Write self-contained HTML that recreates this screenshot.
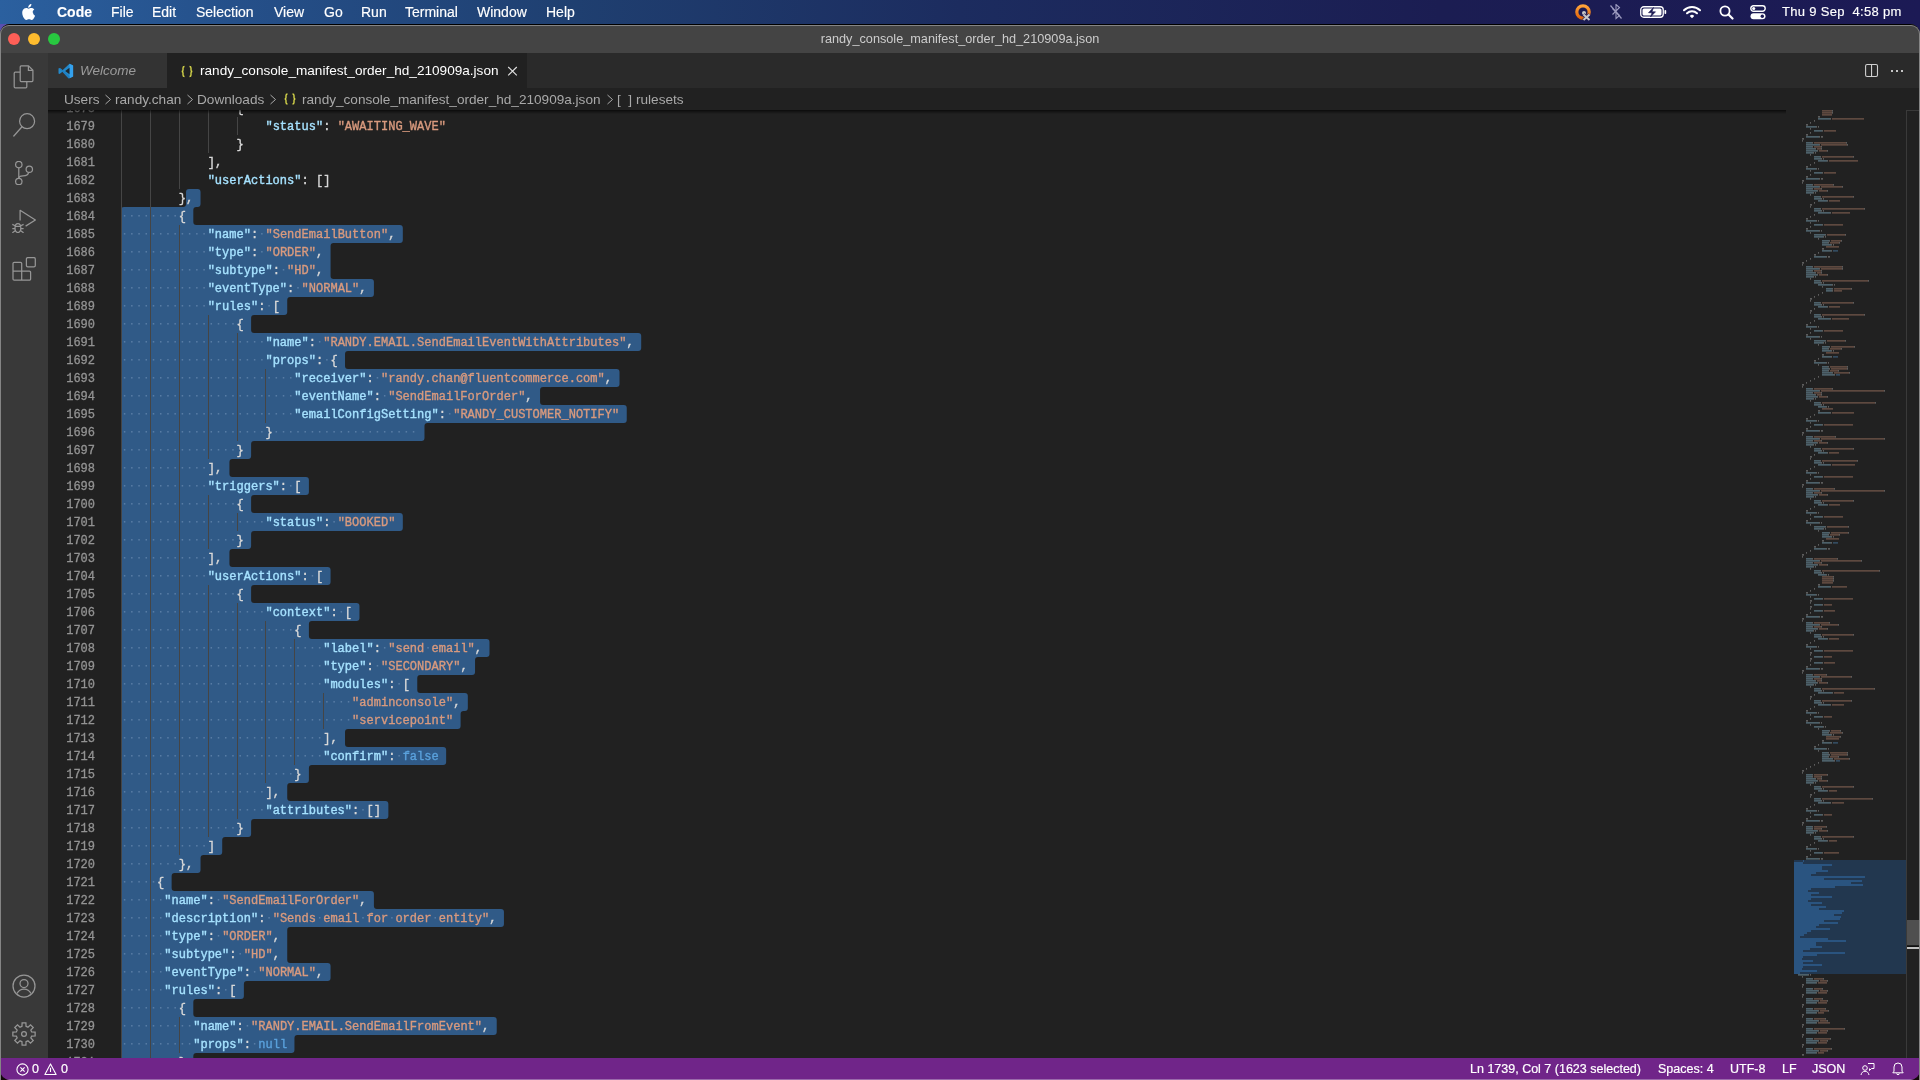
<!DOCTYPE html>
<html><head><meta charset="utf-8">
<style>
*{margin:0;padding:0;box-sizing:border-box}
html,body{width:1920px;height:1080px;overflow:hidden;background:linear-gradient(90deg,#5a4fb0,#1c1a55 10%);font-family:"Liberation Sans",sans-serif}
.abs{position:absolute}
#menubar{will-change:transform;position:absolute;left:0;top:0;width:1920px;height:24px;background:linear-gradient(90deg,#2b609f 0%,#25508a 12%,#1f3f70 30%,#1c2c5f 50%,#1b1d52 75%,#1c1a55 100%);color:#fff;font-size:14px}
#menubar .mi{position:absolute;top:4px;line-height:16px;white-space:nowrap;-webkit-text-stroke:0.15px #fff}
#win{position:absolute;left:0;top:24px;width:1920px;height:1056px;border-radius:10px 10px 10px 10px;overflow:hidden;background:#212121;will-change:transform}
#wborder{position:absolute;left:0;top:24px;width:1920px;height:1056px;border-radius:10px 10px 0 0;border-top:1px solid #000;pointer-events:none;z-index:10}
#wborder2{position:absolute;left:0;top:25px;width:1920px;height:1055px;border-radius:9px 9px 0 0;border:1px solid #858585;border-bottom:none;pointer-events:none;z-index:10}
#titlebar{position:absolute;left:0;top:0;width:1920px;height:29px;background:#444444}
#titlebar .t{position:absolute;left:0;width:1920px;top:7px;text-align:center;color:#cccccc;font-size:12.7px;line-height:16px}
.tl{position:absolute;top:9px;width:12px;height:12px;border-radius:50%}
#actbar{position:absolute;left:0;top:29px;width:48px;height:1005px;background:#393939}
#tabs{position:absolute;left:48px;top:29px;width:1872px;height:35px;background:#2a2a2a}
.tab{position:absolute;top:0;height:35px}
#crumbs{position:absolute;left:48px;top:64px;width:1872px;height:22px;background:#212121;color:#a9a9a9;font-size:13.6px;z-index:2}
#crumbs span.c{position:absolute;top:3.8px;line-height:16px;white-space:nowrap}
#editor{position:absolute;left:48px;top:86px;width:1872px;height:948px;background:#212121;overflow:hidden}
#status{position:absolute;left:0;top:1034px;width:1920px;height:22px;background:#702589;border-bottom:1px solid #9a6aab;color:#fff;font-size:12.5px}
#status .s{position:absolute;top:2.5px;line-height:16px;white-space:nowrap;-webkit-text-stroke:0.2px #fff}
/* code (page coordinates: subtract editor offset) */
#code{position:absolute;left:-48px;top:-110px;width:1920px;height:1080px}
.ln{position:absolute;left:38.5px;width:56px;margin-top:1px;will-change:transform;-webkit-text-stroke:0.3px #939393;text-align:right;font-family:"Liberation Mono",monospace;font-size:12px;line-height:18px;color:#939393;height:18px}
.cl{position:absolute;left:121.3px;margin-top:1px;will-change:transform;-webkit-text-stroke:0.35px currentColor;white-space:pre;font-family:"Liberation Mono",monospace;font-size:12.04px;line-height:18px;height:18px;color:#d4d4d4}
.ig{position:absolute;width:1px;height:18px;background:#454545}
</style></head>
<body>
<div id="menubar">
  <svg class="abs" style="left:21px;top:4px" width="14" height="16" viewBox="0 0 14 16"><path fill="#fff" d="M11.6 8.5c0-2 1.6-2.9 1.7-3-0.9-1.3-2.3-1.5-2.8-1.5-1.2-0.1-2.3 0.7-2.9 0.7-0.6 0-1.5-0.7-2.5-0.7C3.800 4 2.600 4.800 1.900 6c-1.400 2.400-0.400 6 1 8 0.700 1 1.500 2 2.500 2 1 0 1.400-0.700 2.600-0.700s1.500 0.700 2.600 0.700c1.100 0 1.700-1 2.400-2 0.800-1.100 1.100-2.200 1.100-2.300 0 0-2.100-0.800-2.100-3.200zM9.600 2.600c0.500-0.700 0.900-1.600 0.800-2.600-0.800 0-1.800 0.500-2.400 1.200-0.500 0.600-1 1.500-0.800 2.500 0.900 0.100 1.800-0.400 2.400-1.100z"/></svg>
  <div class="mi" style="left:57px;font-weight:bold">Code</div>
  <div class="mi" style="left:111px">File</div>
  <div class="mi" style="left:152px">Edit</div>
  <div class="mi" style="left:196px">Selection</div>
  <div class="mi" style="left:274px">View</div>
  <div class="mi" style="left:324px">Go</div>
  <div class="mi" style="left:361px">Run</div>
  <div class="mi" style="left:405px">Terminal</div>
  <div class="mi" style="left:477px">Window</div>
  <div class="mi" style="left:546px">Help</div>
  <!-- status icons -->
  <svg class="abs" style="left:1575px;top:4px" width="18" height="17" viewBox="0 0 18 17">
    <defs><linearGradient id="og" x1="0" y1="0" x2="0" y2="1"><stop offset="0" stop-color="#ffa43a"/><stop offset="1" stop-color="#e0620a"/></linearGradient></defs>
    <circle cx="8" cy="8" r="6.2" fill="none" stroke="url(#og)" stroke-width="3.2"/>
    <circle cx="9" cy="9" r="2" fill="#c8c8c8"/>
    <path d="M8.5 10.5l6 5.5M14.5 10.5l-6 5.5" stroke="#1e1b50" stroke-width="3.4"/>
    <path d="M8.5 10.5l6 5.5M14.5 10.5l-6 5.5" stroke="#c8c8c8" stroke-width="2"/>
  </svg>
  <svg class="abs" style="left:1609px;top:4px" width="14" height="16" viewBox="0 0 14 16">
    <path d="M3.5 4.5l7 7-3.5 3v-14l3.5 3-7 7" fill="none" stroke="#9d9cc0" stroke-width="1.1"/>
    <path d="M1.5 1.5l11 13" stroke="#9d9cc0" stroke-width="1.2"/>
  </svg>
  <svg class="abs" style="left:1640px;top:6px" width="27" height="12" viewBox="0 0 27 12">
    <rect x="0.75" y="0.75" width="22.5" height="10.5" rx="3" fill="none" stroke="#fff" stroke-width="1.3"/>
    <rect x="24.5" y="4" width="1.7" height="4" rx="0.8" fill="#fff"/>
    <rect x="2.5" y="2.5" width="19" height="7" rx="1.5" fill="#fff"/>
    <path d="M13.5 1.5l-5 5.2h3.5l-1.5 4.3 5-5.2h-3.5z" fill="#1c1b54" stroke="#1c1b54" stroke-width="0.6"/>
  </svg>
  <svg class="abs" style="left:1683px;top:5px" width="18" height="14" viewBox="0 0 18 14">
    <path d="M1 5.2a11.5 11.5 0 0 1 16 0" fill="none" stroke="#fff" stroke-width="2" stroke-linecap="round"/>
    <path d="M4 8.2a7.2 7.2 0 0 1 10 0" fill="none" stroke="#fff" stroke-width="2" stroke-linecap="round"/>
    <path d="M6.8 11a3 3 0 0 1 4.4 0L9 13.3z" fill="#fff"/>
  </svg>
  <svg class="abs" style="left:1719px;top:5px" width="15" height="15" viewBox="0 0 15 15">
    <circle cx="6" cy="6" r="4.6" fill="none" stroke="#fff" stroke-width="1.8"/>
    <path d="M9.5 9.5l4 4" stroke="#fff" stroke-width="2.2" stroke-linecap="round"/>
  </svg>
  <svg class="abs" style="left:1750px;top:5px" width="16" height="15" viewBox="0 0 16 15">
    <rect x="0.8" y="0.8" width="14.4" height="5.4" rx="2.7" fill="none" stroke="#fff" stroke-width="1.4"/>
    <circle cx="3.7" cy="3.5" r="1.6" fill="#fff"/>
    <rect x="0.5" y="8.3" width="15" height="6" rx="3" fill="#fff"/>
    <circle cx="12.3" cy="11.3" r="1.7" fill="#1c1b54"/>
  </svg>
  <div class="mi" style="left:1782px;top:3.6px;font-size:13px;letter-spacing:0.3px">Thu 9 Sep&nbsp;&nbsp;4:58 pm</div>
</div>

<div class="abs" style="left:0;top:1040px;width:30px;height:40px;background:#120808"></div>
<div class="abs" style="left:1890px;top:1040px;width:30px;height:40px;background:#120808"></div>
<div id="win">
  <div id="titlebar">
    <div class="tl" style="left:8px;background:#fe5f57"></div>
    <div class="tl" style="left:28px;background:#febc2e"></div>
    <div class="tl" style="left:48px;background:#28c840"></div>
    <div class="t">randy_console_manifest_order_hd_210909a.json</div>
  </div>
  <div id="actbar">
    <!-- explorer -->
    <svg class="abs" style="left:12px;top:12px" width="24" height="24" viewBox="0 0 24 24" fill="none" stroke="#969696" stroke-width="1.25" stroke-linejoin="round">
      <path d="M9.2,0.9 H16.6 L20.9,5.2 V15.6 a1,1 0 0 1 -1,1 H9.2 a1,1 0 0 1 -1,-1 V1.9 a1,1 0 0 1 1,-1 Z"/>
      <path d="M16.4,1 V5.4 H20.8"/>
      <path d="M8.2,7.2 H3.2 a1,1 0 0 0 -1,1 V21.8 a1,1 0 0 0 1,1 H13.8 a1,1 0 0 0 1,-1 V16.6"/>
    </svg>
    <!-- search -->
    <svg class="abs" style="left:12px;top:60px" width="24" height="24" viewBox="0 0 24 24" fill="none" stroke="#969696" stroke-width="1.25">
      <circle cx="15.1" cy="8.2" r="7.5"/>
      <path d="M9.8,14 L1.8,23" stroke-linecap="round"/>
    </svg>
    <!-- scm -->
    <svg class="abs" style="left:12px;top:108px" width="24" height="24" viewBox="0 0 24 24" fill="none" stroke="#969696" stroke-width="1.25">
      <circle cx="6.8" cy="3.6" r="3.2"/>
      <circle cx="17.3" cy="8.2" r="3.2"/>
      <circle cx="6.8" cy="20.5" r="3.2"/>
      <path d="M6.8,6.8 V17.3"/>
      <path d="M16.6,11.3 C16.2,14.3 13.6,14.8 11,14.8 C8.6,14.8 6.8,15.8 6.8,17.6"/>
    </svg>
    <!-- run -->
    <svg class="abs" style="left:12px;top:156px" width="24" height="24" viewBox="0 0 24 24" fill="none" stroke="#969696" stroke-width="1.25" stroke-linejoin="round">
      <path d="M8.1,11.4 V1.3 L23.4,11 L13.6,17.1"/>
      <ellipse cx="5.9" cy="19.1" rx="2.9" ry="4.4"/>
      <path d="M3,17.3 H8.8"/>
      <path d="M0.3,15.4 L3.2,16.8 M11.6,15.4 L8.7,16.8 M0.3,19.7 H3 M11.6,19.7 H8.8 M0.3,23.8 L3.2,21.8 M11.6,23.8 L8.7,21.8"/>
    </svg>
    <!-- extensions -->
    <svg class="abs" style="left:12px;top:204px" width="24" height="24" viewBox="0 0 24 24" fill="none" stroke="#969696" stroke-width="1.25" stroke-linejoin="round">
      <rect x="14.4" y="0.6" width="8.9" height="9.2" rx="1.4"/>
      <path d="M1,6.6 a1.2,1.2 0 0 1 1.2,-1.2 H8.5 a1.2,1.2 0 0 1 1.2,1.2 V14.2 H17.4 a1.2,1.2 0 0 1 1.2,1.2 V21.9 a1.2,1.2 0 0 1 -1.2,1.2 H2.2 a1.2,1.2 0 0 1 -1.2,-1.2 Z"/>
      <path d="M1,14.2 H9.7 V23"/>
    </svg>
    <!-- account -->
    <svg class="abs" style="left:12px;top:921px" width="24" height="24" viewBox="0 0 24 24" fill="none" stroke="#969696" stroke-width="1.25">
      <circle cx="12" cy="12" r="11"/>
      <circle cx="12" cy="9.5" r="4"/>
      <path d="M5 19.5c1.5-3 4-4.5 7-4.5s5.5 1.5 7 4.5"/>
    </svg>
    <!-- gear -->
    <svg class="abs" style="left:12px;top:969px" width="24" height="24" viewBox="0 0 24 24" fill="none" stroke="#969696" stroke-width="1.25" stroke-linejoin="miter">
      <path d="M9.97,4.37 L10.09,0.86 L13.91,0.86 L14.03,4.37 L15.96,5.17 L18.52,2.77 L21.23,5.48 L18.83,8.04 L19.63,9.97 L23.14,10.09 L23.14,13.91 L19.63,14.03 L18.83,15.96 L21.23,18.52 L18.52,21.23 L15.96,18.83 L14.03,19.63 L13.91,23.14 L10.09,23.14 L9.97,19.63 L8.04,18.83 L5.48,21.23 L2.77,18.52 L5.17,15.96 L4.37,14.03 L0.86,13.91 L0.86,10.09 L4.37,9.97 L5.17,8.04 L2.77,5.48 L5.48,2.77 L8.04,5.17Z"/>
      <circle cx="12" cy="12" r="2.4"/>
    </svg>
  </div>
  <div id="tabs">
    <div class="tab" style="left:0;width:119px;background:#333333">
      <svg class="abs" style="left:10px;top:10px" width="16" height="16" viewBox="0 0 16 16">
        <path d="M11.5 0.8l3.6 1.7v11l-3.6 1.7-7-6.4-3 2.3-1-0.6v-5l1-0.6 3 2.3z" fill="#2489ca"/>
        <path d="M11.5 0.8l3.6 1.7v11l-3.6 1.7z" fill="#34a1ed"/>
        <path d="M11.5 4.7v6.6l-4.3-3.3z" fill="#1e1e1e" opacity="0.9"/>
        <path d="M1.5 5.8l1 -0.6 9 8.1v1.9l-1 .3z" fill="#1f7fc2"/>
      </svg>
      <div class="abs" style="left:32px;top:10px;font-size:13.5px;font-style:italic;color:#9b9b9b;line-height:16px">Welcome</div>
    </div>
    <div class="tab" style="left:119px;width:360px;background:#212121">
      <svg class="abs" style="left:14px;top:11.5px" width="12" height="13" viewBox="0 0 12 12" fill="none" stroke="#d4d44a" stroke-width="1.4"><path d="M3.5 1c-1.2 0-1.5 0.6-1.5 1.5v2c0 0.8-0.4 1.3-1.2 1.5 0.8 0.2 1.2 0.7 1.2 1.5v2c0 0.9 0.3 1.5 1.5 1.5"/><path d="M8.5 1c1.2 0 1.5 0.6 1.5 1.5v2c0 0.8 0.4 1.3 1.2 1.5-0.8 0.2-1.2 0.7-1.2 1.5v2c0 0.9-0.3 1.5-1.5 1.5"/></svg>
      <div class="abs" style="left:33px;top:10px;font-size:13.6px;color:#ffffff;line-height:16px;white-space:nowrap">randy_console_manifest_order_hd_210909a.json</div>
      <svg class="abs" style="left:340px;top:13px" width="11" height="11" viewBox="0 0 11 11"><path d="M1.2 1l8.6 8.4M9.8 1l-8.6 8.4" stroke="#e0e0e0" stroke-width="1.15"/></svg>
    </div>
    <svg class="abs" style="left:1816px;top:10px" width="16" height="16" viewBox="0 0 16 16" fill="none" stroke="#d0d0d0" stroke-width="1.1">
      <rect x="1.6" y="1.5" width="11.9" height="12" rx="1.5"/><path d="M7.55 1.5v12"/>
    </svg>
    <svg class="abs" style="left:1842px;top:10px" width="16" height="16" viewBox="0 0 16 16" fill="#c5c5c5">
      <rect x="1" y="7" width="2" height="2"/><rect x="6" y="7" width="2" height="2"/><rect x="11" y="7" width="2" height="2"/>
    </svg>
  </div>
  <div id="crumbs">
    <span class="c" style="left:16px">Users</span>
    <svg class="abs" style="left:56px;top:6px" width="8" height="11" viewBox="0 0 8 11"><path d="M1.5 1l5 4.5-5 4.5" fill="none" stroke="#a9a9a9" stroke-width="1"/></svg>
    <span class="c" style="left:67px">randy.chan</span>
    <svg class="abs" style="left:138px;top:6px" width="8" height="11" viewBox="0 0 8 11"><path d="M1.5 1l5 4.5-5 4.5" fill="none" stroke="#a9a9a9" stroke-width="1"/></svg>
    <span class="c" style="left:149px">Downloads</span>
    <svg class="abs" style="left:221px;top:6px" width="8" height="11" viewBox="0 0 8 11"><path d="M1.5 1l5 4.5-5 4.5" fill="none" stroke="#a9a9a9" stroke-width="1"/></svg>
    <svg class="abs" style="left:236px;top:5px" width="12" height="12" viewBox="0 0 12 12" fill="none" stroke="#d4d44a" stroke-width="1.4"><path d="M3.5 1c-1.2 0-1.5 0.6-1.5 1.5v2c0 0.8-0.4 1.3-1.2 1.5 0.8 0.2 1.2 0.7 1.2 1.5v2c0 0.9 0.3 1.5 1.5 1.5"/><path d="M8.5 1c1.2 0 1.5 0.6 1.5 1.5v2c0 0.8 0.4 1.3 1.2 1.5-0.8 0.2-1.2 0.7-1.2 1.5v2c0 0.9-0.3 1.5-1.5 1.5"/></svg>
    <span class="c" style="left:254px">randy_console_manifest_order_hd_210909a.json</span>
    <svg class="abs" style="left:558px;top:6px" width="8" height="11" viewBox="0 0 8 11"><path d="M1.5 1l5 4.5-5 4.5" fill="none" stroke="#a9a9a9" stroke-width="1"/></svg>
    <span class="c" style="left:569px">[&nbsp;&nbsp;]</span>
    <span class="c" style="left:588px">rulesets</span>
  </div>
  <div class="abs" style="left:48px;top:86px;width:1738px;height:4px;background:linear-gradient(#000000a0,#00000000);z-index:3"></div>
  <div id="editor">
    <div id="code">
      <div class="ln" style="top:99px">1678</div>
<div class="ln" style="top:117px">1679</div>
<div class="ln" style="top:135px">1680</div>
<div class="ln" style="top:153px">1681</div>
<div class="ln" style="top:171px">1682</div>
<div class="ln" style="top:189px">1683</div>
<div class="ln" style="top:207px">1684</div>
<div class="ln" style="top:225px">1685</div>
<div class="ln" style="top:243px">1686</div>
<div class="ln" style="top:261px">1687</div>
<div class="ln" style="top:279px">1688</div>
<div class="ln" style="top:297px">1689</div>
<div class="ln" style="top:315px">1690</div>
<div class="ln" style="top:333px">1691</div>
<div class="ln" style="top:351px">1692</div>
<div class="ln" style="top:369px">1693</div>
<div class="ln" style="top:387px">1694</div>
<div class="ln" style="top:405px">1695</div>
<div class="ln" style="top:423px">1696</div>
<div class="ln" style="top:441px">1697</div>
<div class="ln" style="top:459px">1698</div>
<div class="ln" style="top:477px">1699</div>
<div class="ln" style="top:495px">1700</div>
<div class="ln" style="top:513px">1701</div>
<div class="ln" style="top:531px">1702</div>
<div class="ln" style="top:549px">1703</div>
<div class="ln" style="top:567px">1704</div>
<div class="ln" style="top:585px">1705</div>
<div class="ln" style="top:603px">1706</div>
<div class="ln" style="top:621px">1707</div>
<div class="ln" style="top:639px">1708</div>
<div class="ln" style="top:657px">1709</div>
<div class="ln" style="top:675px">1710</div>
<div class="ln" style="top:693px">1711</div>
<div class="ln" style="top:711px">1712</div>
<div class="ln" style="top:729px">1713</div>
<div class="ln" style="top:747px">1714</div>
<div class="ln" style="top:765px">1715</div>
<div class="ln" style="top:783px">1716</div>
<div class="ln" style="top:801px">1717</div>
<div class="ln" style="top:819px">1718</div>
<div class="ln" style="top:837px">1719</div>
<div class="ln" style="top:855px">1720</div>
<div class="ln" style="top:873px">1721</div>
<div class="ln" style="top:891px">1722</div>
<div class="ln" style="top:909px">1723</div>
<div class="ln" style="top:927px">1724</div>
<div class="ln" style="top:945px">1725</div>
<div class="ln" style="top:963px">1726</div>
<div class="ln" style="top:981px">1727</div>
<div class="ln" style="top:999px">1728</div>
<div class="ln" style="top:1017px">1729</div>
<div class="ln" style="top:1035px">1730</div>
<div class="ln" style="top:1053px">1731</div>
<div class="ln" style="top:1071px">1732</div>
      <svg class="abs" style="left:0;top:0" width="1920" height="1080">
        <path d="M186.02,192.00 A3,3 0 0 1 189.02,189.00 L197.54,189.00 A3,3 0 0 1 200.54,192.00 L200.54,204.00 A3,3 0 0 1 197.54,207.00 L196.32,207.00 A3,3 0 0 0 193.32,210.00 L193.32,222.00 A3,3 0 0 0 196.32,225.00 L399.81,225.00 A3,3 0 0 1 402.81,228.00 L402.81,240.00 A3,3 0 0 1 399.81,243.00 L333.57,243.00 A3,3 0 0 0 330.57,246.00 L330.57,276.00 A3,3 0 0 0 333.57,279.00 L370.92,279.00 A3,3 0 0 1 373.92,282.00 L373.92,294.00 A3,3 0 0 1 370.92,297.00 L290.23,297.00 A3,3 0 0 0 287.23,300.00 L287.23,312.00 A3,3 0 0 1 284.23,315.00 L254.11,315.00 A3,3 0 0 0 251.11,318.00 L251.11,330.00 A3,3 0 0 0 254.11,333.00 L638.20,333.00 A3,3 0 0 1 641.20,336.00 L641.20,348.00 A3,3 0 0 1 638.20,351.00 L348.02,351.00 A3,3 0 0 0 345.02,354.00 L345.02,366.00 A3,3 0 0 0 348.02,369.00 L616.53,369.00 A3,3 0 0 1 619.53,372.00 L619.53,384.00 A3,3 0 0 1 616.53,387.00 L543.07,387.00 A3,3 0 0 0 540.07,390.00 L540.07,402.00 A3,3 0 0 0 543.07,405.00 L623.76,405.00 A3,3 0 0 1 626.76,408.00 L626.76,420.00 A3,3 0 0 1 623.76,423.00 L427.48,423.00 A3,3 0 0 0 424.48,426.00 L424.48,438.00 A3,3 0 0 1 421.48,441.00 L254.11,441.00 A3,3 0 0 0 251.11,444.00 L251.11,456.00 A3,3 0 0 1 248.11,459.00 L232.44,459.00 A3,3 0 0 0 229.44,462.00 L229.44,474.00 A3,3 0 0 0 232.44,477.00 L305.90,477.00 A3,3 0 0 1 308.90,480.00 L308.90,492.00 A3,3 0 0 1 305.90,495.00 L254.11,495.00 A3,3 0 0 0 251.11,498.00 L251.11,510.00 A3,3 0 0 0 254.11,513.00 L399.81,513.00 A3,3 0 0 1 402.81,516.00 L402.81,528.00 A3,3 0 0 1 399.81,531.00 L254.11,531.00 A3,3 0 0 0 251.11,534.00 L251.11,546.00 A3,3 0 0 1 248.11,549.00 L232.44,549.00 A3,3 0 0 0 229.44,552.00 L229.44,564.00 A3,3 0 0 0 232.44,567.00 L327.57,567.00 A3,3 0 0 1 330.57,570.00 L330.57,582.00 A3,3 0 0 1 327.57,585.00 L254.11,585.00 A3,3 0 0 0 251.11,588.00 L251.11,600.00 A3,3 0 0 0 254.11,603.00 L356.47,603.00 A3,3 0 0 1 359.47,606.00 L359.47,618.00 A3,3 0 0 1 356.47,621.00 L311.90,621.00 A3,3 0 0 0 308.90,624.00 L308.90,636.00 A3,3 0 0 0 311.90,639.00 L486.50,639.00 A3,3 0 0 1 489.50,642.00 L489.50,654.00 A3,3 0 0 1 486.50,657.00 L478.05,657.00 A3,3 0 0 0 475.05,660.00 L475.05,672.00 A3,3 0 0 1 472.05,675.00 L420.26,675.00 A3,3 0 0 0 417.26,678.00 L417.26,690.00 A3,3 0 0 0 420.26,693.00 L464.83,693.00 A3,3 0 0 1 467.83,696.00 L467.83,708.00 A3,3 0 0 1 464.83,711.00 L463.60,711.00 A3,3 0 0 0 460.60,714.00 L460.60,726.00 A3,3 0 0 1 457.60,729.00 L348.02,729.00 A3,3 0 0 0 345.02,732.00 L345.02,744.00 A3,3 0 0 0 348.02,747.00 L443.16,747.00 A3,3 0 0 1 446.16,750.00 L446.16,762.00 A3,3 0 0 1 443.16,765.00 L311.90,765.00 A3,3 0 0 0 308.90,768.00 L308.90,780.00 A3,3 0 0 1 305.90,783.00 L290.23,783.00 A3,3 0 0 0 287.23,786.00 L287.23,798.00 A3,3 0 0 0 290.23,801.00 L385.36,801.00 A3,3 0 0 1 388.36,804.00 L388.36,816.00 A3,3 0 0 1 385.36,819.00 L254.11,819.00 A3,3 0 0 0 251.11,822.00 L251.11,834.00 A3,3 0 0 1 248.11,837.00 L225.21,837.00 A3,3 0 0 0 222.21,840.00 L222.21,852.00 A3,3 0 0 1 219.21,855.00 L203.54,855.00 A3,3 0 0 0 200.54,858.00 L200.54,870.00 A3,3 0 0 1 197.54,873.00 L174.64,873.00 A3,3 0 0 0 171.64,876.00 L171.64,888.00 A3,3 0 0 0 174.64,891.00 L370.92,891.00 A3,3 0 0 1 373.92,894.00 L373.92,906.00 A3,3 0 0 0 376.92,909.00 L500.95,909.00 A3,3 0 0 1 503.95,912.00 L503.95,924.00 A3,3 0 0 1 500.95,927.00 L290.23,927.00 A3,3 0 0 0 287.23,930.00 L287.23,960.00 A3,3 0 0 0 290.23,963.00 L327.57,963.00 A3,3 0 0 1 330.57,966.00 L330.57,978.00 A3,3 0 0 1 327.57,981.00 L246.88,981.00 A3,3 0 0 0 243.88,984.00 L243.88,996.00 A3,3 0 0 1 240.88,999.00 L196.32,999.00 A3,3 0 0 0 193.32,1002.00 L193.32,1014.00 A3,3 0 0 0 196.32,1017.00 L493.72,1017.00 A3,3 0 0 1 496.72,1020.00 L496.72,1032.00 A3,3 0 0 1 493.72,1035.00 L297.45,1035.00 A3,3 0 0 0 294.45,1038.00 L294.45,1050.00 A3,3 0 0 1 291.45,1053.00 L196.32,1053.00 A3,3 0 0 0 193.32,1056.00 L193.32,1068.00 A3,3 0 0 1 190.32,1071.00 L189.09,1071.00 A3,3 0 0 0 186.09,1074.00 L186.09,1126.00 A3,3 0 0 1 183.09,1129.00 L124.00,1129.00 A3,3 0 0 1 121.00,1126.00 L121.00,210.00 A3,3 0 0 1 124.00,207.00 L183.02,207.00 A3,3 0 0 0 186.02,204.00 Z" fill="#305a87"/>
        <g fill="#5a7ea6"><rect x="123.86" y="215.05" width="1.5" height="1.5"/><rect x="131.09" y="215.05" width="1.5" height="1.5"/><rect x="138.31" y="215.05" width="1.5" height="1.5"/><rect x="145.53" y="215.05" width="1.5" height="1.5"/><rect x="152.76" y="215.05" width="1.5" height="1.5"/><rect x="159.98" y="215.05" width="1.5" height="1.5"/><rect x="167.21" y="215.05" width="1.5" height="1.5"/><rect x="174.43" y="215.05" width="1.5" height="1.5"/><rect x="123.86" y="233.05" width="1.5" height="1.5"/><rect x="131.09" y="233.05" width="1.5" height="1.5"/><rect x="138.31" y="233.05" width="1.5" height="1.5"/><rect x="145.53" y="233.05" width="1.5" height="1.5"/><rect x="152.76" y="233.05" width="1.5" height="1.5"/><rect x="159.98" y="233.05" width="1.5" height="1.5"/><rect x="167.21" y="233.05" width="1.5" height="1.5"/><rect x="174.43" y="233.05" width="1.5" height="1.5"/><rect x="181.65" y="233.05" width="1.5" height="1.5"/><rect x="188.88" y="233.05" width="1.5" height="1.5"/><rect x="196.10" y="233.05" width="1.5" height="1.5"/><rect x="203.33" y="233.05" width="1.5" height="1.5"/><rect x="261.12" y="233.05" width="1.5" height="1.5"/><rect x="123.86" y="251.05" width="1.5" height="1.5"/><rect x="131.09" y="251.05" width="1.5" height="1.5"/><rect x="138.31" y="251.05" width="1.5" height="1.5"/><rect x="145.53" y="251.05" width="1.5" height="1.5"/><rect x="152.76" y="251.05" width="1.5" height="1.5"/><rect x="159.98" y="251.05" width="1.5" height="1.5"/><rect x="167.21" y="251.05" width="1.5" height="1.5"/><rect x="174.43" y="251.05" width="1.5" height="1.5"/><rect x="181.65" y="251.05" width="1.5" height="1.5"/><rect x="188.88" y="251.05" width="1.5" height="1.5"/><rect x="196.10" y="251.05" width="1.5" height="1.5"/><rect x="203.33" y="251.05" width="1.5" height="1.5"/><rect x="261.12" y="251.05" width="1.5" height="1.5"/><rect x="123.86" y="269.05" width="1.5" height="1.5"/><rect x="131.09" y="269.05" width="1.5" height="1.5"/><rect x="138.31" y="269.05" width="1.5" height="1.5"/><rect x="145.53" y="269.05" width="1.5" height="1.5"/><rect x="152.76" y="269.05" width="1.5" height="1.5"/><rect x="159.98" y="269.05" width="1.5" height="1.5"/><rect x="167.21" y="269.05" width="1.5" height="1.5"/><rect x="174.43" y="269.05" width="1.5" height="1.5"/><rect x="181.65" y="269.05" width="1.5" height="1.5"/><rect x="188.88" y="269.05" width="1.5" height="1.5"/><rect x="196.10" y="269.05" width="1.5" height="1.5"/><rect x="203.33" y="269.05" width="1.5" height="1.5"/><rect x="282.79" y="269.05" width="1.5" height="1.5"/><rect x="123.86" y="287.05" width="1.5" height="1.5"/><rect x="131.09" y="287.05" width="1.5" height="1.5"/><rect x="138.31" y="287.05" width="1.5" height="1.5"/><rect x="145.53" y="287.05" width="1.5" height="1.5"/><rect x="152.76" y="287.05" width="1.5" height="1.5"/><rect x="159.98" y="287.05" width="1.5" height="1.5"/><rect x="167.21" y="287.05" width="1.5" height="1.5"/><rect x="174.43" y="287.05" width="1.5" height="1.5"/><rect x="181.65" y="287.05" width="1.5" height="1.5"/><rect x="188.88" y="287.05" width="1.5" height="1.5"/><rect x="196.10" y="287.05" width="1.5" height="1.5"/><rect x="203.33" y="287.05" width="1.5" height="1.5"/><rect x="297.24" y="287.05" width="1.5" height="1.5"/><rect x="123.86" y="305.05" width="1.5" height="1.5"/><rect x="131.09" y="305.05" width="1.5" height="1.5"/><rect x="138.31" y="305.05" width="1.5" height="1.5"/><rect x="145.53" y="305.05" width="1.5" height="1.5"/><rect x="152.76" y="305.05" width="1.5" height="1.5"/><rect x="159.98" y="305.05" width="1.5" height="1.5"/><rect x="167.21" y="305.05" width="1.5" height="1.5"/><rect x="174.43" y="305.05" width="1.5" height="1.5"/><rect x="181.65" y="305.05" width="1.5" height="1.5"/><rect x="188.88" y="305.05" width="1.5" height="1.5"/><rect x="196.10" y="305.05" width="1.5" height="1.5"/><rect x="203.33" y="305.05" width="1.5" height="1.5"/><rect x="268.34" y="305.05" width="1.5" height="1.5"/><rect x="123.86" y="323.05" width="1.5" height="1.5"/><rect x="131.09" y="323.05" width="1.5" height="1.5"/><rect x="138.31" y="323.05" width="1.5" height="1.5"/><rect x="145.53" y="323.05" width="1.5" height="1.5"/><rect x="152.76" y="323.05" width="1.5" height="1.5"/><rect x="159.98" y="323.05" width="1.5" height="1.5"/><rect x="167.21" y="323.05" width="1.5" height="1.5"/><rect x="174.43" y="323.05" width="1.5" height="1.5"/><rect x="181.65" y="323.05" width="1.5" height="1.5"/><rect x="188.88" y="323.05" width="1.5" height="1.5"/><rect x="196.10" y="323.05" width="1.5" height="1.5"/><rect x="203.33" y="323.05" width="1.5" height="1.5"/><rect x="210.55" y="323.05" width="1.5" height="1.5"/><rect x="217.77" y="323.05" width="1.5" height="1.5"/><rect x="225.00" y="323.05" width="1.5" height="1.5"/><rect x="232.22" y="323.05" width="1.5" height="1.5"/><rect x="123.86" y="341.05" width="1.5" height="1.5"/><rect x="131.09" y="341.05" width="1.5" height="1.5"/><rect x="138.31" y="341.05" width="1.5" height="1.5"/><rect x="145.53" y="341.05" width="1.5" height="1.5"/><rect x="152.76" y="341.05" width="1.5" height="1.5"/><rect x="159.98" y="341.05" width="1.5" height="1.5"/><rect x="167.21" y="341.05" width="1.5" height="1.5"/><rect x="174.43" y="341.05" width="1.5" height="1.5"/><rect x="181.65" y="341.05" width="1.5" height="1.5"/><rect x="188.88" y="341.05" width="1.5" height="1.5"/><rect x="196.10" y="341.05" width="1.5" height="1.5"/><rect x="203.33" y="341.05" width="1.5" height="1.5"/><rect x="210.55" y="341.05" width="1.5" height="1.5"/><rect x="217.77" y="341.05" width="1.5" height="1.5"/><rect x="225.00" y="341.05" width="1.5" height="1.5"/><rect x="232.22" y="341.05" width="1.5" height="1.5"/><rect x="239.45" y="341.05" width="1.5" height="1.5"/><rect x="246.67" y="341.05" width="1.5" height="1.5"/><rect x="253.89" y="341.05" width="1.5" height="1.5"/><rect x="261.12" y="341.05" width="1.5" height="1.5"/><rect x="318.91" y="341.05" width="1.5" height="1.5"/><rect x="123.86" y="359.05" width="1.5" height="1.5"/><rect x="131.09" y="359.05" width="1.5" height="1.5"/><rect x="138.31" y="359.05" width="1.5" height="1.5"/><rect x="145.53" y="359.05" width="1.5" height="1.5"/><rect x="152.76" y="359.05" width="1.5" height="1.5"/><rect x="159.98" y="359.05" width="1.5" height="1.5"/><rect x="167.21" y="359.05" width="1.5" height="1.5"/><rect x="174.43" y="359.05" width="1.5" height="1.5"/><rect x="181.65" y="359.05" width="1.5" height="1.5"/><rect x="188.88" y="359.05" width="1.5" height="1.5"/><rect x="196.10" y="359.05" width="1.5" height="1.5"/><rect x="203.33" y="359.05" width="1.5" height="1.5"/><rect x="210.55" y="359.05" width="1.5" height="1.5"/><rect x="217.77" y="359.05" width="1.5" height="1.5"/><rect x="225.00" y="359.05" width="1.5" height="1.5"/><rect x="232.22" y="359.05" width="1.5" height="1.5"/><rect x="239.45" y="359.05" width="1.5" height="1.5"/><rect x="246.67" y="359.05" width="1.5" height="1.5"/><rect x="253.89" y="359.05" width="1.5" height="1.5"/><rect x="261.12" y="359.05" width="1.5" height="1.5"/><rect x="326.13" y="359.05" width="1.5" height="1.5"/><rect x="123.86" y="377.05" width="1.5" height="1.5"/><rect x="131.09" y="377.05" width="1.5" height="1.5"/><rect x="138.31" y="377.05" width="1.5" height="1.5"/><rect x="145.53" y="377.05" width="1.5" height="1.5"/><rect x="152.76" y="377.05" width="1.5" height="1.5"/><rect x="159.98" y="377.05" width="1.5" height="1.5"/><rect x="167.21" y="377.05" width="1.5" height="1.5"/><rect x="174.43" y="377.05" width="1.5" height="1.5"/><rect x="181.65" y="377.05" width="1.5" height="1.5"/><rect x="188.88" y="377.05" width="1.5" height="1.5"/><rect x="196.10" y="377.05" width="1.5" height="1.5"/><rect x="203.33" y="377.05" width="1.5" height="1.5"/><rect x="210.55" y="377.05" width="1.5" height="1.5"/><rect x="217.77" y="377.05" width="1.5" height="1.5"/><rect x="225.00" y="377.05" width="1.5" height="1.5"/><rect x="232.22" y="377.05" width="1.5" height="1.5"/><rect x="239.45" y="377.05" width="1.5" height="1.5"/><rect x="246.67" y="377.05" width="1.5" height="1.5"/><rect x="253.89" y="377.05" width="1.5" height="1.5"/><rect x="261.12" y="377.05" width="1.5" height="1.5"/><rect x="268.34" y="377.05" width="1.5" height="1.5"/><rect x="275.57" y="377.05" width="1.5" height="1.5"/><rect x="282.79" y="377.05" width="1.5" height="1.5"/><rect x="290.01" y="377.05" width="1.5" height="1.5"/><rect x="376.70" y="377.05" width="1.5" height="1.5"/><rect x="123.86" y="395.05" width="1.5" height="1.5"/><rect x="131.09" y="395.05" width="1.5" height="1.5"/><rect x="138.31" y="395.05" width="1.5" height="1.5"/><rect x="145.53" y="395.05" width="1.5" height="1.5"/><rect x="152.76" y="395.05" width="1.5" height="1.5"/><rect x="159.98" y="395.05" width="1.5" height="1.5"/><rect x="167.21" y="395.05" width="1.5" height="1.5"/><rect x="174.43" y="395.05" width="1.5" height="1.5"/><rect x="181.65" y="395.05" width="1.5" height="1.5"/><rect x="188.88" y="395.05" width="1.5" height="1.5"/><rect x="196.10" y="395.05" width="1.5" height="1.5"/><rect x="203.33" y="395.05" width="1.5" height="1.5"/><rect x="210.55" y="395.05" width="1.5" height="1.5"/><rect x="217.77" y="395.05" width="1.5" height="1.5"/><rect x="225.00" y="395.05" width="1.5" height="1.5"/><rect x="232.22" y="395.05" width="1.5" height="1.5"/><rect x="239.45" y="395.05" width="1.5" height="1.5"/><rect x="246.67" y="395.05" width="1.5" height="1.5"/><rect x="253.89" y="395.05" width="1.5" height="1.5"/><rect x="261.12" y="395.05" width="1.5" height="1.5"/><rect x="268.34" y="395.05" width="1.5" height="1.5"/><rect x="275.57" y="395.05" width="1.5" height="1.5"/><rect x="282.79" y="395.05" width="1.5" height="1.5"/><rect x="290.01" y="395.05" width="1.5" height="1.5"/><rect x="383.93" y="395.05" width="1.5" height="1.5"/><rect x="123.86" y="413.05" width="1.5" height="1.5"/><rect x="131.09" y="413.05" width="1.5" height="1.5"/><rect x="138.31" y="413.05" width="1.5" height="1.5"/><rect x="145.53" y="413.05" width="1.5" height="1.5"/><rect x="152.76" y="413.05" width="1.5" height="1.5"/><rect x="159.98" y="413.05" width="1.5" height="1.5"/><rect x="167.21" y="413.05" width="1.5" height="1.5"/><rect x="174.43" y="413.05" width="1.5" height="1.5"/><rect x="181.65" y="413.05" width="1.5" height="1.5"/><rect x="188.88" y="413.05" width="1.5" height="1.5"/><rect x="196.10" y="413.05" width="1.5" height="1.5"/><rect x="203.33" y="413.05" width="1.5" height="1.5"/><rect x="210.55" y="413.05" width="1.5" height="1.5"/><rect x="217.77" y="413.05" width="1.5" height="1.5"/><rect x="225.00" y="413.05" width="1.5" height="1.5"/><rect x="232.22" y="413.05" width="1.5" height="1.5"/><rect x="239.45" y="413.05" width="1.5" height="1.5"/><rect x="246.67" y="413.05" width="1.5" height="1.5"/><rect x="253.89" y="413.05" width="1.5" height="1.5"/><rect x="261.12" y="413.05" width="1.5" height="1.5"/><rect x="268.34" y="413.05" width="1.5" height="1.5"/><rect x="275.57" y="413.05" width="1.5" height="1.5"/><rect x="282.79" y="413.05" width="1.5" height="1.5"/><rect x="290.01" y="413.05" width="1.5" height="1.5"/><rect x="448.94" y="413.05" width="1.5" height="1.5"/><rect x="123.86" y="431.05" width="1.5" height="1.5"/><rect x="131.09" y="431.05" width="1.5" height="1.5"/><rect x="138.31" y="431.05" width="1.5" height="1.5"/><rect x="145.53" y="431.05" width="1.5" height="1.5"/><rect x="152.76" y="431.05" width="1.5" height="1.5"/><rect x="159.98" y="431.05" width="1.5" height="1.5"/><rect x="167.21" y="431.05" width="1.5" height="1.5"/><rect x="174.43" y="431.05" width="1.5" height="1.5"/><rect x="181.65" y="431.05" width="1.5" height="1.5"/><rect x="188.88" y="431.05" width="1.5" height="1.5"/><rect x="196.10" y="431.05" width="1.5" height="1.5"/><rect x="203.33" y="431.05" width="1.5" height="1.5"/><rect x="210.55" y="431.05" width="1.5" height="1.5"/><rect x="217.77" y="431.05" width="1.5" height="1.5"/><rect x="225.00" y="431.05" width="1.5" height="1.5"/><rect x="232.22" y="431.05" width="1.5" height="1.5"/><rect x="239.45" y="431.05" width="1.5" height="1.5"/><rect x="246.67" y="431.05" width="1.5" height="1.5"/><rect x="253.89" y="431.05" width="1.5" height="1.5"/><rect x="261.12" y="431.05" width="1.5" height="1.5"/><rect x="275.57" y="431.05" width="1.5" height="1.5"/><rect x="282.79" y="431.05" width="1.5" height="1.5"/><rect x="290.01" y="431.05" width="1.5" height="1.5"/><rect x="297.24" y="431.05" width="1.5" height="1.5"/><rect x="304.46" y="431.05" width="1.5" height="1.5"/><rect x="311.69" y="431.05" width="1.5" height="1.5"/><rect x="318.91" y="431.05" width="1.5" height="1.5"/><rect x="326.13" y="431.05" width="1.5" height="1.5"/><rect x="333.36" y="431.05" width="1.5" height="1.5"/><rect x="340.58" y="431.05" width="1.5" height="1.5"/><rect x="347.81" y="431.05" width="1.5" height="1.5"/><rect x="355.03" y="431.05" width="1.5" height="1.5"/><rect x="362.25" y="431.05" width="1.5" height="1.5"/><rect x="369.48" y="431.05" width="1.5" height="1.5"/><rect x="376.70" y="431.05" width="1.5" height="1.5"/><rect x="383.93" y="431.05" width="1.5" height="1.5"/><rect x="391.15" y="431.05" width="1.5" height="1.5"/><rect x="398.37" y="431.05" width="1.5" height="1.5"/><rect x="405.60" y="431.05" width="1.5" height="1.5"/><rect x="412.82" y="431.05" width="1.5" height="1.5"/><rect x="123.86" y="449.05" width="1.5" height="1.5"/><rect x="131.09" y="449.05" width="1.5" height="1.5"/><rect x="138.31" y="449.05" width="1.5" height="1.5"/><rect x="145.53" y="449.05" width="1.5" height="1.5"/><rect x="152.76" y="449.05" width="1.5" height="1.5"/><rect x="159.98" y="449.05" width="1.5" height="1.5"/><rect x="167.21" y="449.05" width="1.5" height="1.5"/><rect x="174.43" y="449.05" width="1.5" height="1.5"/><rect x="181.65" y="449.05" width="1.5" height="1.5"/><rect x="188.88" y="449.05" width="1.5" height="1.5"/><rect x="196.10" y="449.05" width="1.5" height="1.5"/><rect x="203.33" y="449.05" width="1.5" height="1.5"/><rect x="210.55" y="449.05" width="1.5" height="1.5"/><rect x="217.77" y="449.05" width="1.5" height="1.5"/><rect x="225.00" y="449.05" width="1.5" height="1.5"/><rect x="232.22" y="449.05" width="1.5" height="1.5"/><rect x="123.86" y="467.05" width="1.5" height="1.5"/><rect x="131.09" y="467.05" width="1.5" height="1.5"/><rect x="138.31" y="467.05" width="1.5" height="1.5"/><rect x="145.53" y="467.05" width="1.5" height="1.5"/><rect x="152.76" y="467.05" width="1.5" height="1.5"/><rect x="159.98" y="467.05" width="1.5" height="1.5"/><rect x="167.21" y="467.05" width="1.5" height="1.5"/><rect x="174.43" y="467.05" width="1.5" height="1.5"/><rect x="181.65" y="467.05" width="1.5" height="1.5"/><rect x="188.88" y="467.05" width="1.5" height="1.5"/><rect x="196.10" y="467.05" width="1.5" height="1.5"/><rect x="203.33" y="467.05" width="1.5" height="1.5"/><rect x="123.86" y="485.05" width="1.5" height="1.5"/><rect x="131.09" y="485.05" width="1.5" height="1.5"/><rect x="138.31" y="485.05" width="1.5" height="1.5"/><rect x="145.53" y="485.05" width="1.5" height="1.5"/><rect x="152.76" y="485.05" width="1.5" height="1.5"/><rect x="159.98" y="485.05" width="1.5" height="1.5"/><rect x="167.21" y="485.05" width="1.5" height="1.5"/><rect x="174.43" y="485.05" width="1.5" height="1.5"/><rect x="181.65" y="485.05" width="1.5" height="1.5"/><rect x="188.88" y="485.05" width="1.5" height="1.5"/><rect x="196.10" y="485.05" width="1.5" height="1.5"/><rect x="203.33" y="485.05" width="1.5" height="1.5"/><rect x="290.01" y="485.05" width="1.5" height="1.5"/><rect x="123.86" y="503.05" width="1.5" height="1.5"/><rect x="131.09" y="503.05" width="1.5" height="1.5"/><rect x="138.31" y="503.05" width="1.5" height="1.5"/><rect x="145.53" y="503.05" width="1.5" height="1.5"/><rect x="152.76" y="503.05" width="1.5" height="1.5"/><rect x="159.98" y="503.05" width="1.5" height="1.5"/><rect x="167.21" y="503.05" width="1.5" height="1.5"/><rect x="174.43" y="503.05" width="1.5" height="1.5"/><rect x="181.65" y="503.05" width="1.5" height="1.5"/><rect x="188.88" y="503.05" width="1.5" height="1.5"/><rect x="196.10" y="503.05" width="1.5" height="1.5"/><rect x="203.33" y="503.05" width="1.5" height="1.5"/><rect x="210.55" y="503.05" width="1.5" height="1.5"/><rect x="217.77" y="503.05" width="1.5" height="1.5"/><rect x="225.00" y="503.05" width="1.5" height="1.5"/><rect x="232.22" y="503.05" width="1.5" height="1.5"/><rect x="123.86" y="521.05" width="1.5" height="1.5"/><rect x="131.09" y="521.05" width="1.5" height="1.5"/><rect x="138.31" y="521.05" width="1.5" height="1.5"/><rect x="145.53" y="521.05" width="1.5" height="1.5"/><rect x="152.76" y="521.05" width="1.5" height="1.5"/><rect x="159.98" y="521.05" width="1.5" height="1.5"/><rect x="167.21" y="521.05" width="1.5" height="1.5"/><rect x="174.43" y="521.05" width="1.5" height="1.5"/><rect x="181.65" y="521.05" width="1.5" height="1.5"/><rect x="188.88" y="521.05" width="1.5" height="1.5"/><rect x="196.10" y="521.05" width="1.5" height="1.5"/><rect x="203.33" y="521.05" width="1.5" height="1.5"/><rect x="210.55" y="521.05" width="1.5" height="1.5"/><rect x="217.77" y="521.05" width="1.5" height="1.5"/><rect x="225.00" y="521.05" width="1.5" height="1.5"/><rect x="232.22" y="521.05" width="1.5" height="1.5"/><rect x="239.45" y="521.05" width="1.5" height="1.5"/><rect x="246.67" y="521.05" width="1.5" height="1.5"/><rect x="253.89" y="521.05" width="1.5" height="1.5"/><rect x="261.12" y="521.05" width="1.5" height="1.5"/><rect x="333.36" y="521.05" width="1.5" height="1.5"/><rect x="123.86" y="539.05" width="1.5" height="1.5"/><rect x="131.09" y="539.05" width="1.5" height="1.5"/><rect x="138.31" y="539.05" width="1.5" height="1.5"/><rect x="145.53" y="539.05" width="1.5" height="1.5"/><rect x="152.76" y="539.05" width="1.5" height="1.5"/><rect x="159.98" y="539.05" width="1.5" height="1.5"/><rect x="167.21" y="539.05" width="1.5" height="1.5"/><rect x="174.43" y="539.05" width="1.5" height="1.5"/><rect x="181.65" y="539.05" width="1.5" height="1.5"/><rect x="188.88" y="539.05" width="1.5" height="1.5"/><rect x="196.10" y="539.05" width="1.5" height="1.5"/><rect x="203.33" y="539.05" width="1.5" height="1.5"/><rect x="210.55" y="539.05" width="1.5" height="1.5"/><rect x="217.77" y="539.05" width="1.5" height="1.5"/><rect x="225.00" y="539.05" width="1.5" height="1.5"/><rect x="232.22" y="539.05" width="1.5" height="1.5"/><rect x="123.86" y="557.05" width="1.5" height="1.5"/><rect x="131.09" y="557.05" width="1.5" height="1.5"/><rect x="138.31" y="557.05" width="1.5" height="1.5"/><rect x="145.53" y="557.05" width="1.5" height="1.5"/><rect x="152.76" y="557.05" width="1.5" height="1.5"/><rect x="159.98" y="557.05" width="1.5" height="1.5"/><rect x="167.21" y="557.05" width="1.5" height="1.5"/><rect x="174.43" y="557.05" width="1.5" height="1.5"/><rect x="181.65" y="557.05" width="1.5" height="1.5"/><rect x="188.88" y="557.05" width="1.5" height="1.5"/><rect x="196.10" y="557.05" width="1.5" height="1.5"/><rect x="203.33" y="557.05" width="1.5" height="1.5"/><rect x="123.86" y="575.05" width="1.5" height="1.5"/><rect x="131.09" y="575.05" width="1.5" height="1.5"/><rect x="138.31" y="575.05" width="1.5" height="1.5"/><rect x="145.53" y="575.05" width="1.5" height="1.5"/><rect x="152.76" y="575.05" width="1.5" height="1.5"/><rect x="159.98" y="575.05" width="1.5" height="1.5"/><rect x="167.21" y="575.05" width="1.5" height="1.5"/><rect x="174.43" y="575.05" width="1.5" height="1.5"/><rect x="181.65" y="575.05" width="1.5" height="1.5"/><rect x="188.88" y="575.05" width="1.5" height="1.5"/><rect x="196.10" y="575.05" width="1.5" height="1.5"/><rect x="203.33" y="575.05" width="1.5" height="1.5"/><rect x="311.69" y="575.05" width="1.5" height="1.5"/><rect x="123.86" y="593.05" width="1.5" height="1.5"/><rect x="131.09" y="593.05" width="1.5" height="1.5"/><rect x="138.31" y="593.05" width="1.5" height="1.5"/><rect x="145.53" y="593.05" width="1.5" height="1.5"/><rect x="152.76" y="593.05" width="1.5" height="1.5"/><rect x="159.98" y="593.05" width="1.5" height="1.5"/><rect x="167.21" y="593.05" width="1.5" height="1.5"/><rect x="174.43" y="593.05" width="1.5" height="1.5"/><rect x="181.65" y="593.05" width="1.5" height="1.5"/><rect x="188.88" y="593.05" width="1.5" height="1.5"/><rect x="196.10" y="593.05" width="1.5" height="1.5"/><rect x="203.33" y="593.05" width="1.5" height="1.5"/><rect x="210.55" y="593.05" width="1.5" height="1.5"/><rect x="217.77" y="593.05" width="1.5" height="1.5"/><rect x="225.00" y="593.05" width="1.5" height="1.5"/><rect x="232.22" y="593.05" width="1.5" height="1.5"/><rect x="123.86" y="611.05" width="1.5" height="1.5"/><rect x="131.09" y="611.05" width="1.5" height="1.5"/><rect x="138.31" y="611.05" width="1.5" height="1.5"/><rect x="145.53" y="611.05" width="1.5" height="1.5"/><rect x="152.76" y="611.05" width="1.5" height="1.5"/><rect x="159.98" y="611.05" width="1.5" height="1.5"/><rect x="167.21" y="611.05" width="1.5" height="1.5"/><rect x="174.43" y="611.05" width="1.5" height="1.5"/><rect x="181.65" y="611.05" width="1.5" height="1.5"/><rect x="188.88" y="611.05" width="1.5" height="1.5"/><rect x="196.10" y="611.05" width="1.5" height="1.5"/><rect x="203.33" y="611.05" width="1.5" height="1.5"/><rect x="210.55" y="611.05" width="1.5" height="1.5"/><rect x="217.77" y="611.05" width="1.5" height="1.5"/><rect x="225.00" y="611.05" width="1.5" height="1.5"/><rect x="232.22" y="611.05" width="1.5" height="1.5"/><rect x="239.45" y="611.05" width="1.5" height="1.5"/><rect x="246.67" y="611.05" width="1.5" height="1.5"/><rect x="253.89" y="611.05" width="1.5" height="1.5"/><rect x="261.12" y="611.05" width="1.5" height="1.5"/><rect x="340.58" y="611.05" width="1.5" height="1.5"/><rect x="123.86" y="629.05" width="1.5" height="1.5"/><rect x="131.09" y="629.05" width="1.5" height="1.5"/><rect x="138.31" y="629.05" width="1.5" height="1.5"/><rect x="145.53" y="629.05" width="1.5" height="1.5"/><rect x="152.76" y="629.05" width="1.5" height="1.5"/><rect x="159.98" y="629.05" width="1.5" height="1.5"/><rect x="167.21" y="629.05" width="1.5" height="1.5"/><rect x="174.43" y="629.05" width="1.5" height="1.5"/><rect x="181.65" y="629.05" width="1.5" height="1.5"/><rect x="188.88" y="629.05" width="1.5" height="1.5"/><rect x="196.10" y="629.05" width="1.5" height="1.5"/><rect x="203.33" y="629.05" width="1.5" height="1.5"/><rect x="210.55" y="629.05" width="1.5" height="1.5"/><rect x="217.77" y="629.05" width="1.5" height="1.5"/><rect x="225.00" y="629.05" width="1.5" height="1.5"/><rect x="232.22" y="629.05" width="1.5" height="1.5"/><rect x="239.45" y="629.05" width="1.5" height="1.5"/><rect x="246.67" y="629.05" width="1.5" height="1.5"/><rect x="253.89" y="629.05" width="1.5" height="1.5"/><rect x="261.12" y="629.05" width="1.5" height="1.5"/><rect x="268.34" y="629.05" width="1.5" height="1.5"/><rect x="275.57" y="629.05" width="1.5" height="1.5"/><rect x="282.79" y="629.05" width="1.5" height="1.5"/><rect x="290.01" y="629.05" width="1.5" height="1.5"/><rect x="123.86" y="647.05" width="1.5" height="1.5"/><rect x="131.09" y="647.05" width="1.5" height="1.5"/><rect x="138.31" y="647.05" width="1.5" height="1.5"/><rect x="145.53" y="647.05" width="1.5" height="1.5"/><rect x="152.76" y="647.05" width="1.5" height="1.5"/><rect x="159.98" y="647.05" width="1.5" height="1.5"/><rect x="167.21" y="647.05" width="1.5" height="1.5"/><rect x="174.43" y="647.05" width="1.5" height="1.5"/><rect x="181.65" y="647.05" width="1.5" height="1.5"/><rect x="188.88" y="647.05" width="1.5" height="1.5"/><rect x="196.10" y="647.05" width="1.5" height="1.5"/><rect x="203.33" y="647.05" width="1.5" height="1.5"/><rect x="210.55" y="647.05" width="1.5" height="1.5"/><rect x="217.77" y="647.05" width="1.5" height="1.5"/><rect x="225.00" y="647.05" width="1.5" height="1.5"/><rect x="232.22" y="647.05" width="1.5" height="1.5"/><rect x="239.45" y="647.05" width="1.5" height="1.5"/><rect x="246.67" y="647.05" width="1.5" height="1.5"/><rect x="253.89" y="647.05" width="1.5" height="1.5"/><rect x="261.12" y="647.05" width="1.5" height="1.5"/><rect x="268.34" y="647.05" width="1.5" height="1.5"/><rect x="275.57" y="647.05" width="1.5" height="1.5"/><rect x="282.79" y="647.05" width="1.5" height="1.5"/><rect x="290.01" y="647.05" width="1.5" height="1.5"/><rect x="297.24" y="647.05" width="1.5" height="1.5"/><rect x="304.46" y="647.05" width="1.5" height="1.5"/><rect x="311.69" y="647.05" width="1.5" height="1.5"/><rect x="318.91" y="647.05" width="1.5" height="1.5"/><rect x="383.93" y="647.05" width="1.5" height="1.5"/><rect x="427.27" y="647.05" width="1.5" height="1.5"/><rect x="123.86" y="665.05" width="1.5" height="1.5"/><rect x="131.09" y="665.05" width="1.5" height="1.5"/><rect x="138.31" y="665.05" width="1.5" height="1.5"/><rect x="145.53" y="665.05" width="1.5" height="1.5"/><rect x="152.76" y="665.05" width="1.5" height="1.5"/><rect x="159.98" y="665.05" width="1.5" height="1.5"/><rect x="167.21" y="665.05" width="1.5" height="1.5"/><rect x="174.43" y="665.05" width="1.5" height="1.5"/><rect x="181.65" y="665.05" width="1.5" height="1.5"/><rect x="188.88" y="665.05" width="1.5" height="1.5"/><rect x="196.10" y="665.05" width="1.5" height="1.5"/><rect x="203.33" y="665.05" width="1.5" height="1.5"/><rect x="210.55" y="665.05" width="1.5" height="1.5"/><rect x="217.77" y="665.05" width="1.5" height="1.5"/><rect x="225.00" y="665.05" width="1.5" height="1.5"/><rect x="232.22" y="665.05" width="1.5" height="1.5"/><rect x="239.45" y="665.05" width="1.5" height="1.5"/><rect x="246.67" y="665.05" width="1.5" height="1.5"/><rect x="253.89" y="665.05" width="1.5" height="1.5"/><rect x="261.12" y="665.05" width="1.5" height="1.5"/><rect x="268.34" y="665.05" width="1.5" height="1.5"/><rect x="275.57" y="665.05" width="1.5" height="1.5"/><rect x="282.79" y="665.05" width="1.5" height="1.5"/><rect x="290.01" y="665.05" width="1.5" height="1.5"/><rect x="297.24" y="665.05" width="1.5" height="1.5"/><rect x="304.46" y="665.05" width="1.5" height="1.5"/><rect x="311.69" y="665.05" width="1.5" height="1.5"/><rect x="318.91" y="665.05" width="1.5" height="1.5"/><rect x="376.70" y="665.05" width="1.5" height="1.5"/><rect x="123.86" y="683.05" width="1.5" height="1.5"/><rect x="131.09" y="683.05" width="1.5" height="1.5"/><rect x="138.31" y="683.05" width="1.5" height="1.5"/><rect x="145.53" y="683.05" width="1.5" height="1.5"/><rect x="152.76" y="683.05" width="1.5" height="1.5"/><rect x="159.98" y="683.05" width="1.5" height="1.5"/><rect x="167.21" y="683.05" width="1.5" height="1.5"/><rect x="174.43" y="683.05" width="1.5" height="1.5"/><rect x="181.65" y="683.05" width="1.5" height="1.5"/><rect x="188.88" y="683.05" width="1.5" height="1.5"/><rect x="196.10" y="683.05" width="1.5" height="1.5"/><rect x="203.33" y="683.05" width="1.5" height="1.5"/><rect x="210.55" y="683.05" width="1.5" height="1.5"/><rect x="217.77" y="683.05" width="1.5" height="1.5"/><rect x="225.00" y="683.05" width="1.5" height="1.5"/><rect x="232.22" y="683.05" width="1.5" height="1.5"/><rect x="239.45" y="683.05" width="1.5" height="1.5"/><rect x="246.67" y="683.05" width="1.5" height="1.5"/><rect x="253.89" y="683.05" width="1.5" height="1.5"/><rect x="261.12" y="683.05" width="1.5" height="1.5"/><rect x="268.34" y="683.05" width="1.5" height="1.5"/><rect x="275.57" y="683.05" width="1.5" height="1.5"/><rect x="282.79" y="683.05" width="1.5" height="1.5"/><rect x="290.01" y="683.05" width="1.5" height="1.5"/><rect x="297.24" y="683.05" width="1.5" height="1.5"/><rect x="304.46" y="683.05" width="1.5" height="1.5"/><rect x="311.69" y="683.05" width="1.5" height="1.5"/><rect x="318.91" y="683.05" width="1.5" height="1.5"/><rect x="398.37" y="683.05" width="1.5" height="1.5"/><rect x="123.86" y="701.05" width="1.5" height="1.5"/><rect x="131.09" y="701.05" width="1.5" height="1.5"/><rect x="138.31" y="701.05" width="1.5" height="1.5"/><rect x="145.53" y="701.05" width="1.5" height="1.5"/><rect x="152.76" y="701.05" width="1.5" height="1.5"/><rect x="159.98" y="701.05" width="1.5" height="1.5"/><rect x="167.21" y="701.05" width="1.5" height="1.5"/><rect x="174.43" y="701.05" width="1.5" height="1.5"/><rect x="181.65" y="701.05" width="1.5" height="1.5"/><rect x="188.88" y="701.05" width="1.5" height="1.5"/><rect x="196.10" y="701.05" width="1.5" height="1.5"/><rect x="203.33" y="701.05" width="1.5" height="1.5"/><rect x="210.55" y="701.05" width="1.5" height="1.5"/><rect x="217.77" y="701.05" width="1.5" height="1.5"/><rect x="225.00" y="701.05" width="1.5" height="1.5"/><rect x="232.22" y="701.05" width="1.5" height="1.5"/><rect x="239.45" y="701.05" width="1.5" height="1.5"/><rect x="246.67" y="701.05" width="1.5" height="1.5"/><rect x="253.89" y="701.05" width="1.5" height="1.5"/><rect x="261.12" y="701.05" width="1.5" height="1.5"/><rect x="268.34" y="701.05" width="1.5" height="1.5"/><rect x="275.57" y="701.05" width="1.5" height="1.5"/><rect x="282.79" y="701.05" width="1.5" height="1.5"/><rect x="290.01" y="701.05" width="1.5" height="1.5"/><rect x="297.24" y="701.05" width="1.5" height="1.5"/><rect x="304.46" y="701.05" width="1.5" height="1.5"/><rect x="311.69" y="701.05" width="1.5" height="1.5"/><rect x="318.91" y="701.05" width="1.5" height="1.5"/><rect x="326.13" y="701.05" width="1.5" height="1.5"/><rect x="333.36" y="701.05" width="1.5" height="1.5"/><rect x="340.58" y="701.05" width="1.5" height="1.5"/><rect x="347.81" y="701.05" width="1.5" height="1.5"/><rect x="123.86" y="719.05" width="1.5" height="1.5"/><rect x="131.09" y="719.05" width="1.5" height="1.5"/><rect x="138.31" y="719.05" width="1.5" height="1.5"/><rect x="145.53" y="719.05" width="1.5" height="1.5"/><rect x="152.76" y="719.05" width="1.5" height="1.5"/><rect x="159.98" y="719.05" width="1.5" height="1.5"/><rect x="167.21" y="719.05" width="1.5" height="1.5"/><rect x="174.43" y="719.05" width="1.5" height="1.5"/><rect x="181.65" y="719.05" width="1.5" height="1.5"/><rect x="188.88" y="719.05" width="1.5" height="1.5"/><rect x="196.10" y="719.05" width="1.5" height="1.5"/><rect x="203.33" y="719.05" width="1.5" height="1.5"/><rect x="210.55" y="719.05" width="1.5" height="1.5"/><rect x="217.77" y="719.05" width="1.5" height="1.5"/><rect x="225.00" y="719.05" width="1.5" height="1.5"/><rect x="232.22" y="719.05" width="1.5" height="1.5"/><rect x="239.45" y="719.05" width="1.5" height="1.5"/><rect x="246.67" y="719.05" width="1.5" height="1.5"/><rect x="253.89" y="719.05" width="1.5" height="1.5"/><rect x="261.12" y="719.05" width="1.5" height="1.5"/><rect x="268.34" y="719.05" width="1.5" height="1.5"/><rect x="275.57" y="719.05" width="1.5" height="1.5"/><rect x="282.79" y="719.05" width="1.5" height="1.5"/><rect x="290.01" y="719.05" width="1.5" height="1.5"/><rect x="297.24" y="719.05" width="1.5" height="1.5"/><rect x="304.46" y="719.05" width="1.5" height="1.5"/><rect x="311.69" y="719.05" width="1.5" height="1.5"/><rect x="318.91" y="719.05" width="1.5" height="1.5"/><rect x="326.13" y="719.05" width="1.5" height="1.5"/><rect x="333.36" y="719.05" width="1.5" height="1.5"/><rect x="340.58" y="719.05" width="1.5" height="1.5"/><rect x="347.81" y="719.05" width="1.5" height="1.5"/><rect x="123.86" y="737.05" width="1.5" height="1.5"/><rect x="131.09" y="737.05" width="1.5" height="1.5"/><rect x="138.31" y="737.05" width="1.5" height="1.5"/><rect x="145.53" y="737.05" width="1.5" height="1.5"/><rect x="152.76" y="737.05" width="1.5" height="1.5"/><rect x="159.98" y="737.05" width="1.5" height="1.5"/><rect x="167.21" y="737.05" width="1.5" height="1.5"/><rect x="174.43" y="737.05" width="1.5" height="1.5"/><rect x="181.65" y="737.05" width="1.5" height="1.5"/><rect x="188.88" y="737.05" width="1.5" height="1.5"/><rect x="196.10" y="737.05" width="1.5" height="1.5"/><rect x="203.33" y="737.05" width="1.5" height="1.5"/><rect x="210.55" y="737.05" width="1.5" height="1.5"/><rect x="217.77" y="737.05" width="1.5" height="1.5"/><rect x="225.00" y="737.05" width="1.5" height="1.5"/><rect x="232.22" y="737.05" width="1.5" height="1.5"/><rect x="239.45" y="737.05" width="1.5" height="1.5"/><rect x="246.67" y="737.05" width="1.5" height="1.5"/><rect x="253.89" y="737.05" width="1.5" height="1.5"/><rect x="261.12" y="737.05" width="1.5" height="1.5"/><rect x="268.34" y="737.05" width="1.5" height="1.5"/><rect x="275.57" y="737.05" width="1.5" height="1.5"/><rect x="282.79" y="737.05" width="1.5" height="1.5"/><rect x="290.01" y="737.05" width="1.5" height="1.5"/><rect x="297.24" y="737.05" width="1.5" height="1.5"/><rect x="304.46" y="737.05" width="1.5" height="1.5"/><rect x="311.69" y="737.05" width="1.5" height="1.5"/><rect x="318.91" y="737.05" width="1.5" height="1.5"/><rect x="123.86" y="755.05" width="1.5" height="1.5"/><rect x="131.09" y="755.05" width="1.5" height="1.5"/><rect x="138.31" y="755.05" width="1.5" height="1.5"/><rect x="145.53" y="755.05" width="1.5" height="1.5"/><rect x="152.76" y="755.05" width="1.5" height="1.5"/><rect x="159.98" y="755.05" width="1.5" height="1.5"/><rect x="167.21" y="755.05" width="1.5" height="1.5"/><rect x="174.43" y="755.05" width="1.5" height="1.5"/><rect x="181.65" y="755.05" width="1.5" height="1.5"/><rect x="188.88" y="755.05" width="1.5" height="1.5"/><rect x="196.10" y="755.05" width="1.5" height="1.5"/><rect x="203.33" y="755.05" width="1.5" height="1.5"/><rect x="210.55" y="755.05" width="1.5" height="1.5"/><rect x="217.77" y="755.05" width="1.5" height="1.5"/><rect x="225.00" y="755.05" width="1.5" height="1.5"/><rect x="232.22" y="755.05" width="1.5" height="1.5"/><rect x="239.45" y="755.05" width="1.5" height="1.5"/><rect x="246.67" y="755.05" width="1.5" height="1.5"/><rect x="253.89" y="755.05" width="1.5" height="1.5"/><rect x="261.12" y="755.05" width="1.5" height="1.5"/><rect x="268.34" y="755.05" width="1.5" height="1.5"/><rect x="275.57" y="755.05" width="1.5" height="1.5"/><rect x="282.79" y="755.05" width="1.5" height="1.5"/><rect x="290.01" y="755.05" width="1.5" height="1.5"/><rect x="297.24" y="755.05" width="1.5" height="1.5"/><rect x="304.46" y="755.05" width="1.5" height="1.5"/><rect x="311.69" y="755.05" width="1.5" height="1.5"/><rect x="318.91" y="755.05" width="1.5" height="1.5"/><rect x="398.37" y="755.05" width="1.5" height="1.5"/><rect x="123.86" y="773.05" width="1.5" height="1.5"/><rect x="131.09" y="773.05" width="1.5" height="1.5"/><rect x="138.31" y="773.05" width="1.5" height="1.5"/><rect x="145.53" y="773.05" width="1.5" height="1.5"/><rect x="152.76" y="773.05" width="1.5" height="1.5"/><rect x="159.98" y="773.05" width="1.5" height="1.5"/><rect x="167.21" y="773.05" width="1.5" height="1.5"/><rect x="174.43" y="773.05" width="1.5" height="1.5"/><rect x="181.65" y="773.05" width="1.5" height="1.5"/><rect x="188.88" y="773.05" width="1.5" height="1.5"/><rect x="196.10" y="773.05" width="1.5" height="1.5"/><rect x="203.33" y="773.05" width="1.5" height="1.5"/><rect x="210.55" y="773.05" width="1.5" height="1.5"/><rect x="217.77" y="773.05" width="1.5" height="1.5"/><rect x="225.00" y="773.05" width="1.5" height="1.5"/><rect x="232.22" y="773.05" width="1.5" height="1.5"/><rect x="239.45" y="773.05" width="1.5" height="1.5"/><rect x="246.67" y="773.05" width="1.5" height="1.5"/><rect x="253.89" y="773.05" width="1.5" height="1.5"/><rect x="261.12" y="773.05" width="1.5" height="1.5"/><rect x="268.34" y="773.05" width="1.5" height="1.5"/><rect x="275.57" y="773.05" width="1.5" height="1.5"/><rect x="282.79" y="773.05" width="1.5" height="1.5"/><rect x="290.01" y="773.05" width="1.5" height="1.5"/><rect x="123.86" y="791.05" width="1.5" height="1.5"/><rect x="131.09" y="791.05" width="1.5" height="1.5"/><rect x="138.31" y="791.05" width="1.5" height="1.5"/><rect x="145.53" y="791.05" width="1.5" height="1.5"/><rect x="152.76" y="791.05" width="1.5" height="1.5"/><rect x="159.98" y="791.05" width="1.5" height="1.5"/><rect x="167.21" y="791.05" width="1.5" height="1.5"/><rect x="174.43" y="791.05" width="1.5" height="1.5"/><rect x="181.65" y="791.05" width="1.5" height="1.5"/><rect x="188.88" y="791.05" width="1.5" height="1.5"/><rect x="196.10" y="791.05" width="1.5" height="1.5"/><rect x="203.33" y="791.05" width="1.5" height="1.5"/><rect x="210.55" y="791.05" width="1.5" height="1.5"/><rect x="217.77" y="791.05" width="1.5" height="1.5"/><rect x="225.00" y="791.05" width="1.5" height="1.5"/><rect x="232.22" y="791.05" width="1.5" height="1.5"/><rect x="239.45" y="791.05" width="1.5" height="1.5"/><rect x="246.67" y="791.05" width="1.5" height="1.5"/><rect x="253.89" y="791.05" width="1.5" height="1.5"/><rect x="261.12" y="791.05" width="1.5" height="1.5"/><rect x="123.86" y="809.05" width="1.5" height="1.5"/><rect x="131.09" y="809.05" width="1.5" height="1.5"/><rect x="138.31" y="809.05" width="1.5" height="1.5"/><rect x="145.53" y="809.05" width="1.5" height="1.5"/><rect x="152.76" y="809.05" width="1.5" height="1.5"/><rect x="159.98" y="809.05" width="1.5" height="1.5"/><rect x="167.21" y="809.05" width="1.5" height="1.5"/><rect x="174.43" y="809.05" width="1.5" height="1.5"/><rect x="181.65" y="809.05" width="1.5" height="1.5"/><rect x="188.88" y="809.05" width="1.5" height="1.5"/><rect x="196.10" y="809.05" width="1.5" height="1.5"/><rect x="203.33" y="809.05" width="1.5" height="1.5"/><rect x="210.55" y="809.05" width="1.5" height="1.5"/><rect x="217.77" y="809.05" width="1.5" height="1.5"/><rect x="225.00" y="809.05" width="1.5" height="1.5"/><rect x="232.22" y="809.05" width="1.5" height="1.5"/><rect x="239.45" y="809.05" width="1.5" height="1.5"/><rect x="246.67" y="809.05" width="1.5" height="1.5"/><rect x="253.89" y="809.05" width="1.5" height="1.5"/><rect x="261.12" y="809.05" width="1.5" height="1.5"/><rect x="362.25" y="809.05" width="1.5" height="1.5"/><rect x="123.86" y="827.05" width="1.5" height="1.5"/><rect x="131.09" y="827.05" width="1.5" height="1.5"/><rect x="138.31" y="827.05" width="1.5" height="1.5"/><rect x="145.53" y="827.05" width="1.5" height="1.5"/><rect x="152.76" y="827.05" width="1.5" height="1.5"/><rect x="159.98" y="827.05" width="1.5" height="1.5"/><rect x="167.21" y="827.05" width="1.5" height="1.5"/><rect x="174.43" y="827.05" width="1.5" height="1.5"/><rect x="181.65" y="827.05" width="1.5" height="1.5"/><rect x="188.88" y="827.05" width="1.5" height="1.5"/><rect x="196.10" y="827.05" width="1.5" height="1.5"/><rect x="203.33" y="827.05" width="1.5" height="1.5"/><rect x="210.55" y="827.05" width="1.5" height="1.5"/><rect x="217.77" y="827.05" width="1.5" height="1.5"/><rect x="225.00" y="827.05" width="1.5" height="1.5"/><rect x="232.22" y="827.05" width="1.5" height="1.5"/><rect x="123.86" y="845.05" width="1.5" height="1.5"/><rect x="131.09" y="845.05" width="1.5" height="1.5"/><rect x="138.31" y="845.05" width="1.5" height="1.5"/><rect x="145.53" y="845.05" width="1.5" height="1.5"/><rect x="152.76" y="845.05" width="1.5" height="1.5"/><rect x="159.98" y="845.05" width="1.5" height="1.5"/><rect x="167.21" y="845.05" width="1.5" height="1.5"/><rect x="174.43" y="845.05" width="1.5" height="1.5"/><rect x="181.65" y="845.05" width="1.5" height="1.5"/><rect x="188.88" y="845.05" width="1.5" height="1.5"/><rect x="196.10" y="845.05" width="1.5" height="1.5"/><rect x="203.33" y="845.05" width="1.5" height="1.5"/><rect x="123.86" y="863.05" width="1.5" height="1.5"/><rect x="131.09" y="863.05" width="1.5" height="1.5"/><rect x="138.31" y="863.05" width="1.5" height="1.5"/><rect x="145.53" y="863.05" width="1.5" height="1.5"/><rect x="152.76" y="863.05" width="1.5" height="1.5"/><rect x="159.98" y="863.05" width="1.5" height="1.5"/><rect x="167.21" y="863.05" width="1.5" height="1.5"/><rect x="174.43" y="863.05" width="1.5" height="1.5"/><rect x="123.86" y="881.05" width="1.5" height="1.5"/><rect x="131.09" y="881.05" width="1.5" height="1.5"/><rect x="138.31" y="881.05" width="1.5" height="1.5"/><rect x="145.53" y="881.05" width="1.5" height="1.5"/><rect x="152.76" y="881.05" width="1.5" height="1.5"/><rect x="123.86" y="899.05" width="1.5" height="1.5"/><rect x="131.09" y="899.05" width="1.5" height="1.5"/><rect x="138.31" y="899.05" width="1.5" height="1.5"/><rect x="145.53" y="899.05" width="1.5" height="1.5"/><rect x="152.76" y="899.05" width="1.5" height="1.5"/><rect x="159.98" y="899.05" width="1.5" height="1.5"/><rect x="217.77" y="899.05" width="1.5" height="1.5"/><rect x="123.86" y="917.05" width="1.5" height="1.5"/><rect x="131.09" y="917.05" width="1.5" height="1.5"/><rect x="138.31" y="917.05" width="1.5" height="1.5"/><rect x="145.53" y="917.05" width="1.5" height="1.5"/><rect x="152.76" y="917.05" width="1.5" height="1.5"/><rect x="159.98" y="917.05" width="1.5" height="1.5"/><rect x="268.34" y="917.05" width="1.5" height="1.5"/><rect x="318.91" y="917.05" width="1.5" height="1.5"/><rect x="362.25" y="917.05" width="1.5" height="1.5"/><rect x="391.15" y="917.05" width="1.5" height="1.5"/><rect x="434.49" y="917.05" width="1.5" height="1.5"/><rect x="123.86" y="935.05" width="1.5" height="1.5"/><rect x="131.09" y="935.05" width="1.5" height="1.5"/><rect x="138.31" y="935.05" width="1.5" height="1.5"/><rect x="145.53" y="935.05" width="1.5" height="1.5"/><rect x="152.76" y="935.05" width="1.5" height="1.5"/><rect x="159.98" y="935.05" width="1.5" height="1.5"/><rect x="217.77" y="935.05" width="1.5" height="1.5"/><rect x="123.86" y="953.05" width="1.5" height="1.5"/><rect x="131.09" y="953.05" width="1.5" height="1.5"/><rect x="138.31" y="953.05" width="1.5" height="1.5"/><rect x="145.53" y="953.05" width="1.5" height="1.5"/><rect x="152.76" y="953.05" width="1.5" height="1.5"/><rect x="159.98" y="953.05" width="1.5" height="1.5"/><rect x="239.45" y="953.05" width="1.5" height="1.5"/><rect x="123.86" y="971.05" width="1.5" height="1.5"/><rect x="131.09" y="971.05" width="1.5" height="1.5"/><rect x="138.31" y="971.05" width="1.5" height="1.5"/><rect x="145.53" y="971.05" width="1.5" height="1.5"/><rect x="152.76" y="971.05" width="1.5" height="1.5"/><rect x="159.98" y="971.05" width="1.5" height="1.5"/><rect x="253.89" y="971.05" width="1.5" height="1.5"/><rect x="123.86" y="989.05" width="1.5" height="1.5"/><rect x="131.09" y="989.05" width="1.5" height="1.5"/><rect x="138.31" y="989.05" width="1.5" height="1.5"/><rect x="145.53" y="989.05" width="1.5" height="1.5"/><rect x="152.76" y="989.05" width="1.5" height="1.5"/><rect x="159.98" y="989.05" width="1.5" height="1.5"/><rect x="225.00" y="989.05" width="1.5" height="1.5"/><rect x="123.86" y="1007.05" width="1.5" height="1.5"/><rect x="131.09" y="1007.05" width="1.5" height="1.5"/><rect x="138.31" y="1007.05" width="1.5" height="1.5"/><rect x="145.53" y="1007.05" width="1.5" height="1.5"/><rect x="152.76" y="1007.05" width="1.5" height="1.5"/><rect x="159.98" y="1007.05" width="1.5" height="1.5"/><rect x="167.21" y="1007.05" width="1.5" height="1.5"/><rect x="174.43" y="1007.05" width="1.5" height="1.5"/><rect x="123.86" y="1025.05" width="1.5" height="1.5"/><rect x="131.09" y="1025.05" width="1.5" height="1.5"/><rect x="138.31" y="1025.05" width="1.5" height="1.5"/><rect x="145.53" y="1025.05" width="1.5" height="1.5"/><rect x="152.76" y="1025.05" width="1.5" height="1.5"/><rect x="159.98" y="1025.05" width="1.5" height="1.5"/><rect x="167.21" y="1025.05" width="1.5" height="1.5"/><rect x="174.43" y="1025.05" width="1.5" height="1.5"/><rect x="181.65" y="1025.05" width="1.5" height="1.5"/><rect x="188.88" y="1025.05" width="1.5" height="1.5"/><rect x="246.67" y="1025.05" width="1.5" height="1.5"/><rect x="123.86" y="1043.05" width="1.5" height="1.5"/><rect x="131.09" y="1043.05" width="1.5" height="1.5"/><rect x="138.31" y="1043.05" width="1.5" height="1.5"/><rect x="145.53" y="1043.05" width="1.5" height="1.5"/><rect x="152.76" y="1043.05" width="1.5" height="1.5"/><rect x="159.98" y="1043.05" width="1.5" height="1.5"/><rect x="167.21" y="1043.05" width="1.5" height="1.5"/><rect x="174.43" y="1043.05" width="1.5" height="1.5"/><rect x="181.65" y="1043.05" width="1.5" height="1.5"/><rect x="188.88" y="1043.05" width="1.5" height="1.5"/><rect x="253.89" y="1043.05" width="1.5" height="1.5"/><rect x="123.86" y="1061.05" width="1.5" height="1.5"/><rect x="131.09" y="1061.05" width="1.5" height="1.5"/><rect x="138.31" y="1061.05" width="1.5" height="1.5"/><rect x="145.53" y="1061.05" width="1.5" height="1.5"/><rect x="152.76" y="1061.05" width="1.5" height="1.5"/><rect x="159.98" y="1061.05" width="1.5" height="1.5"/><rect x="167.21" y="1061.05" width="1.5" height="1.5"/><rect x="174.43" y="1061.05" width="1.5" height="1.5"/><rect x="123.86" y="1079.05" width="1.5" height="1.5"/><rect x="131.09" y="1079.05" width="1.5" height="1.5"/><rect x="138.31" y="1079.05" width="1.5" height="1.5"/><rect x="145.53" y="1079.05" width="1.5" height="1.5"/><rect x="152.76" y="1079.05" width="1.5" height="1.5"/><rect x="159.98" y="1079.05" width="1.5" height="1.5"/></g>
      </svg>
      <div class="ig" style="left:121.00px;top:99px"></div>
<div class="ig" style="left:149.90px;top:99px"></div>
<div class="ig" style="left:178.79px;top:99px"></div>
<div class="ig" style="left:207.69px;top:99px"></div>
<div class="ig" style="left:121.00px;top:117px"></div>
<div class="ig" style="left:149.90px;top:117px"></div>
<div class="ig" style="left:178.79px;top:117px"></div>
<div class="ig" style="left:207.69px;top:117px"></div>
<div class="ig" style="left:236.58px;top:117px"></div>
<div class="ig" style="left:121.00px;top:135px"></div>
<div class="ig" style="left:149.90px;top:135px"></div>
<div class="ig" style="left:178.79px;top:135px"></div>
<div class="ig" style="left:207.69px;top:135px"></div>
<div class="ig" style="left:121.00px;top:153px"></div>
<div class="ig" style="left:149.90px;top:153px"></div>
<div class="ig" style="left:178.79px;top:153px"></div>
<div class="ig" style="left:121.00px;top:171px"></div>
<div class="ig" style="left:149.90px;top:171px"></div>
<div class="ig" style="left:178.79px;top:171px"></div>
<div class="ig" style="left:121.00px;top:189px"></div>
<div class="ig" style="left:149.90px;top:189px"></div>
<div class="ig" style="left:121.00px;top:207px"></div>
<div class="ig" style="left:149.90px;top:207px"></div>
<div class="ig" style="left:121.00px;top:225px"></div>
<div class="ig" style="left:149.90px;top:225px"></div>
<div class="ig" style="left:178.79px;top:225px"></div>
<div class="ig" style="left:121.00px;top:243px"></div>
<div class="ig" style="left:149.90px;top:243px"></div>
<div class="ig" style="left:178.79px;top:243px"></div>
<div class="ig" style="left:121.00px;top:261px"></div>
<div class="ig" style="left:149.90px;top:261px"></div>
<div class="ig" style="left:178.79px;top:261px"></div>
<div class="ig" style="left:121.00px;top:279px"></div>
<div class="ig" style="left:149.90px;top:279px"></div>
<div class="ig" style="left:178.79px;top:279px"></div>
<div class="ig" style="left:121.00px;top:297px"></div>
<div class="ig" style="left:149.90px;top:297px"></div>
<div class="ig" style="left:178.79px;top:297px"></div>
<div class="ig" style="left:121.00px;top:315px"></div>
<div class="ig" style="left:149.90px;top:315px"></div>
<div class="ig" style="left:178.79px;top:315px"></div>
<div class="ig" style="left:207.69px;top:315px"></div>
<div class="ig" style="left:121.00px;top:333px"></div>
<div class="ig" style="left:149.90px;top:333px"></div>
<div class="ig" style="left:178.79px;top:333px"></div>
<div class="ig" style="left:207.69px;top:333px"></div>
<div class="ig" style="left:236.58px;top:333px"></div>
<div class="ig" style="left:121.00px;top:351px"></div>
<div class="ig" style="left:149.90px;top:351px"></div>
<div class="ig" style="left:178.79px;top:351px"></div>
<div class="ig" style="left:207.69px;top:351px"></div>
<div class="ig" style="left:236.58px;top:351px"></div>
<div class="ig" style="left:121.00px;top:369px"></div>
<div class="ig" style="left:149.90px;top:369px"></div>
<div class="ig" style="left:178.79px;top:369px"></div>
<div class="ig" style="left:207.69px;top:369px"></div>
<div class="ig" style="left:236.58px;top:369px"></div>
<div class="ig" style="left:265.48px;top:369px"></div>
<div class="ig" style="left:121.00px;top:387px"></div>
<div class="ig" style="left:149.90px;top:387px"></div>
<div class="ig" style="left:178.79px;top:387px"></div>
<div class="ig" style="left:207.69px;top:387px"></div>
<div class="ig" style="left:236.58px;top:387px"></div>
<div class="ig" style="left:265.48px;top:387px"></div>
<div class="ig" style="left:121.00px;top:405px"></div>
<div class="ig" style="left:149.90px;top:405px"></div>
<div class="ig" style="left:178.79px;top:405px"></div>
<div class="ig" style="left:207.69px;top:405px"></div>
<div class="ig" style="left:236.58px;top:405px"></div>
<div class="ig" style="left:265.48px;top:405px"></div>
<div class="ig" style="left:121.00px;top:423px"></div>
<div class="ig" style="left:149.90px;top:423px"></div>
<div class="ig" style="left:178.79px;top:423px"></div>
<div class="ig" style="left:207.69px;top:423px"></div>
<div class="ig" style="left:236.58px;top:423px"></div>
<div class="ig" style="left:121.00px;top:441px"></div>
<div class="ig" style="left:149.90px;top:441px"></div>
<div class="ig" style="left:178.79px;top:441px"></div>
<div class="ig" style="left:207.69px;top:441px"></div>
<div class="ig" style="left:121.00px;top:459px"></div>
<div class="ig" style="left:149.90px;top:459px"></div>
<div class="ig" style="left:178.79px;top:459px"></div>
<div class="ig" style="left:121.00px;top:477px"></div>
<div class="ig" style="left:149.90px;top:477px"></div>
<div class="ig" style="left:178.79px;top:477px"></div>
<div class="ig" style="left:121.00px;top:495px"></div>
<div class="ig" style="left:149.90px;top:495px"></div>
<div class="ig" style="left:178.79px;top:495px"></div>
<div class="ig" style="left:207.69px;top:495px"></div>
<div class="ig" style="left:121.00px;top:513px"></div>
<div class="ig" style="left:149.90px;top:513px"></div>
<div class="ig" style="left:178.79px;top:513px"></div>
<div class="ig" style="left:207.69px;top:513px"></div>
<div class="ig" style="left:236.58px;top:513px"></div>
<div class="ig" style="left:121.00px;top:531px"></div>
<div class="ig" style="left:149.90px;top:531px"></div>
<div class="ig" style="left:178.79px;top:531px"></div>
<div class="ig" style="left:207.69px;top:531px"></div>
<div class="ig" style="left:121.00px;top:549px"></div>
<div class="ig" style="left:149.90px;top:549px"></div>
<div class="ig" style="left:178.79px;top:549px"></div>
<div class="ig" style="left:121.00px;top:567px"></div>
<div class="ig" style="left:149.90px;top:567px"></div>
<div class="ig" style="left:178.79px;top:567px"></div>
<div class="ig" style="left:121.00px;top:585px"></div>
<div class="ig" style="left:149.90px;top:585px"></div>
<div class="ig" style="left:178.79px;top:585px"></div>
<div class="ig" style="left:207.69px;top:585px"></div>
<div class="ig" style="left:121.00px;top:603px"></div>
<div class="ig" style="left:149.90px;top:603px"></div>
<div class="ig" style="left:178.79px;top:603px"></div>
<div class="ig" style="left:207.69px;top:603px"></div>
<div class="ig" style="left:236.58px;top:603px"></div>
<div class="ig" style="left:121.00px;top:621px"></div>
<div class="ig" style="left:149.90px;top:621px"></div>
<div class="ig" style="left:178.79px;top:621px"></div>
<div class="ig" style="left:207.69px;top:621px"></div>
<div class="ig" style="left:236.58px;top:621px"></div>
<div class="ig" style="left:265.48px;top:621px"></div>
<div class="ig" style="left:121.00px;top:639px"></div>
<div class="ig" style="left:149.90px;top:639px"></div>
<div class="ig" style="left:178.79px;top:639px"></div>
<div class="ig" style="left:207.69px;top:639px"></div>
<div class="ig" style="left:236.58px;top:639px"></div>
<div class="ig" style="left:265.48px;top:639px"></div>
<div class="ig" style="left:294.38px;top:639px"></div>
<div class="ig" style="left:121.00px;top:657px"></div>
<div class="ig" style="left:149.90px;top:657px"></div>
<div class="ig" style="left:178.79px;top:657px"></div>
<div class="ig" style="left:207.69px;top:657px"></div>
<div class="ig" style="left:236.58px;top:657px"></div>
<div class="ig" style="left:265.48px;top:657px"></div>
<div class="ig" style="left:294.38px;top:657px"></div>
<div class="ig" style="left:121.00px;top:675px"></div>
<div class="ig" style="left:149.90px;top:675px"></div>
<div class="ig" style="left:178.79px;top:675px"></div>
<div class="ig" style="left:207.69px;top:675px"></div>
<div class="ig" style="left:236.58px;top:675px"></div>
<div class="ig" style="left:265.48px;top:675px"></div>
<div class="ig" style="left:294.38px;top:675px"></div>
<div class="ig" style="left:121.00px;top:693px"></div>
<div class="ig" style="left:149.90px;top:693px"></div>
<div class="ig" style="left:178.79px;top:693px"></div>
<div class="ig" style="left:207.69px;top:693px"></div>
<div class="ig" style="left:236.58px;top:693px"></div>
<div class="ig" style="left:265.48px;top:693px"></div>
<div class="ig" style="left:294.38px;top:693px"></div>
<div class="ig" style="left:323.27px;top:693px"></div>
<div class="ig" style="left:121.00px;top:711px"></div>
<div class="ig" style="left:149.90px;top:711px"></div>
<div class="ig" style="left:178.79px;top:711px"></div>
<div class="ig" style="left:207.69px;top:711px"></div>
<div class="ig" style="left:236.58px;top:711px"></div>
<div class="ig" style="left:265.48px;top:711px"></div>
<div class="ig" style="left:294.38px;top:711px"></div>
<div class="ig" style="left:323.27px;top:711px"></div>
<div class="ig" style="left:121.00px;top:729px"></div>
<div class="ig" style="left:149.90px;top:729px"></div>
<div class="ig" style="left:178.79px;top:729px"></div>
<div class="ig" style="left:207.69px;top:729px"></div>
<div class="ig" style="left:236.58px;top:729px"></div>
<div class="ig" style="left:265.48px;top:729px"></div>
<div class="ig" style="left:294.38px;top:729px"></div>
<div class="ig" style="left:121.00px;top:747px"></div>
<div class="ig" style="left:149.90px;top:747px"></div>
<div class="ig" style="left:178.79px;top:747px"></div>
<div class="ig" style="left:207.69px;top:747px"></div>
<div class="ig" style="left:236.58px;top:747px"></div>
<div class="ig" style="left:265.48px;top:747px"></div>
<div class="ig" style="left:294.38px;top:747px"></div>
<div class="ig" style="left:121.00px;top:765px"></div>
<div class="ig" style="left:149.90px;top:765px"></div>
<div class="ig" style="left:178.79px;top:765px"></div>
<div class="ig" style="left:207.69px;top:765px"></div>
<div class="ig" style="left:236.58px;top:765px"></div>
<div class="ig" style="left:265.48px;top:765px"></div>
<div class="ig" style="left:121.00px;top:783px"></div>
<div class="ig" style="left:149.90px;top:783px"></div>
<div class="ig" style="left:178.79px;top:783px"></div>
<div class="ig" style="left:207.69px;top:783px"></div>
<div class="ig" style="left:236.58px;top:783px"></div>
<div class="ig" style="left:121.00px;top:801px"></div>
<div class="ig" style="left:149.90px;top:801px"></div>
<div class="ig" style="left:178.79px;top:801px"></div>
<div class="ig" style="left:207.69px;top:801px"></div>
<div class="ig" style="left:236.58px;top:801px"></div>
<div class="ig" style="left:121.00px;top:819px"></div>
<div class="ig" style="left:149.90px;top:819px"></div>
<div class="ig" style="left:178.79px;top:819px"></div>
<div class="ig" style="left:207.69px;top:819px"></div>
<div class="ig" style="left:121.00px;top:837px"></div>
<div class="ig" style="left:149.90px;top:837px"></div>
<div class="ig" style="left:178.79px;top:837px"></div>
<div class="ig" style="left:121.00px;top:855px"></div>
<div class="ig" style="left:149.90px;top:855px"></div>
<div class="ig" style="left:121.00px;top:873px"></div>
<div class="ig" style="left:149.90px;top:873px"></div>
<div class="ig" style="left:121.00px;top:891px"></div>
<div class="ig" style="left:149.90px;top:891px"></div>
<div class="ig" style="left:121.00px;top:909px"></div>
<div class="ig" style="left:149.90px;top:909px"></div>
<div class="ig" style="left:121.00px;top:927px"></div>
<div class="ig" style="left:149.90px;top:927px"></div>
<div class="ig" style="left:121.00px;top:945px"></div>
<div class="ig" style="left:149.90px;top:945px"></div>
<div class="ig" style="left:121.00px;top:963px"></div>
<div class="ig" style="left:149.90px;top:963px"></div>
<div class="ig" style="left:121.00px;top:981px"></div>
<div class="ig" style="left:149.90px;top:981px"></div>
<div class="ig" style="left:121.00px;top:999px"></div>
<div class="ig" style="left:149.90px;top:999px"></div>
<div class="ig" style="left:121.00px;top:1017px"></div>
<div class="ig" style="left:149.90px;top:1017px"></div>
<div class="ig" style="left:178.79px;top:1017px"></div>
<div class="ig" style="left:121.00px;top:1035px"></div>
<div class="ig" style="left:149.90px;top:1035px"></div>
<div class="ig" style="left:178.79px;top:1035px"></div>
<div class="ig" style="left:121.00px;top:1053px"></div>
<div class="ig" style="left:149.90px;top:1053px"></div>
<div class="ig" style="left:121.00px;top:1071px"></div>
<div class="ig" style="left:149.90px;top:1071px"></div>
      <div class="cl" style="top:99px">                <span style="color:#d8d8d8">{</span></div>
<div class="cl" style="top:117px">                    <span style="color:#a6e2ff">&quot;status&quot;</span><span style="color:#d8d8d8">:</span> <span style="color:#d99a7e">&quot;AWAITING_WAVE&quot;</span></div>
<div class="cl" style="top:135px">                <span style="color:#d8d8d8">}</span></div>
<div class="cl" style="top:153px">            <span style="color:#d8d8d8">]</span><span style="color:#d8d8d8">,</span></div>
<div class="cl" style="top:171px">            <span style="color:#a6e2ff">&quot;userActions&quot;</span><span style="color:#d8d8d8">:</span> <span style="color:#d8d8d8">[</span><span style="color:#d8d8d8">]</span></div>
<div class="cl" style="top:189px">        <span style="color:#d8d8d8">}</span><span style="color:#d8d8d8">,</span></div>
<div class="cl" style="top:207px">        <span style="color:#d8d8d8">{</span></div>
<div class="cl" style="top:225px">            <span style="color:#a6e2ff">&quot;name&quot;</span><span style="color:#d8d8d8">:</span> <span style="color:#d99a7e">&quot;SendEmailButton&quot;</span><span style="color:#d8d8d8">,</span></div>
<div class="cl" style="top:243px">            <span style="color:#a6e2ff">&quot;type&quot;</span><span style="color:#d8d8d8">:</span> <span style="color:#d99a7e">&quot;ORDER&quot;</span><span style="color:#d8d8d8">,</span></div>
<div class="cl" style="top:261px">            <span style="color:#a6e2ff">&quot;subtype&quot;</span><span style="color:#d8d8d8">:</span> <span style="color:#d99a7e">&quot;HD&quot;</span><span style="color:#d8d8d8">,</span></div>
<div class="cl" style="top:279px">            <span style="color:#a6e2ff">&quot;eventType&quot;</span><span style="color:#d8d8d8">:</span> <span style="color:#d99a7e">&quot;NORMAL&quot;</span><span style="color:#d8d8d8">,</span></div>
<div class="cl" style="top:297px">            <span style="color:#a6e2ff">&quot;rules&quot;</span><span style="color:#d8d8d8">:</span> <span style="color:#d8d8d8">[</span></div>
<div class="cl" style="top:315px">                <span style="color:#d8d8d8">{</span></div>
<div class="cl" style="top:333px">                    <span style="color:#a6e2ff">&quot;name&quot;</span><span style="color:#d8d8d8">:</span> <span style="color:#d99a7e">&quot;RANDY.EMAIL.SendEmailEventWithAttributes&quot;</span><span style="color:#d8d8d8">,</span></div>
<div class="cl" style="top:351px">                    <span style="color:#a6e2ff">&quot;props&quot;</span><span style="color:#d8d8d8">:</span> <span style="color:#d8d8d8">{</span></div>
<div class="cl" style="top:369px">                        <span style="color:#a6e2ff">&quot;receiver&quot;</span><span style="color:#d8d8d8">:</span> <span style="color:#d99a7e">&quot;randy.chan@fluentcommerce.com&quot;</span><span style="color:#d8d8d8">,</span></div>
<div class="cl" style="top:387px">                        <span style="color:#a6e2ff">&quot;eventName&quot;</span><span style="color:#d8d8d8">:</span> <span style="color:#d99a7e">&quot;SendEmailForOrder&quot;</span><span style="color:#d8d8d8">,</span></div>
<div class="cl" style="top:405px">                        <span style="color:#a6e2ff">&quot;emailConfigSetting&quot;</span><span style="color:#d8d8d8">:</span> <span style="color:#d99a7e">&quot;RANDY_CUSTOMER_NOTIFY&quot;</span></div>
<div class="cl" style="top:423px">                    <span style="color:#d8d8d8">}</span>                    </div>
<div class="cl" style="top:441px">                <span style="color:#d8d8d8">}</span></div>
<div class="cl" style="top:459px">            <span style="color:#d8d8d8">]</span><span style="color:#d8d8d8">,</span></div>
<div class="cl" style="top:477px">            <span style="color:#a6e2ff">&quot;triggers&quot;</span><span style="color:#d8d8d8">:</span> <span style="color:#d8d8d8">[</span></div>
<div class="cl" style="top:495px">                <span style="color:#d8d8d8">{</span></div>
<div class="cl" style="top:513px">                    <span style="color:#a6e2ff">&quot;status&quot;</span><span style="color:#d8d8d8">:</span> <span style="color:#d99a7e">&quot;BOOKED&quot;</span></div>
<div class="cl" style="top:531px">                <span style="color:#d8d8d8">}</span></div>
<div class="cl" style="top:549px">            <span style="color:#d8d8d8">]</span><span style="color:#d8d8d8">,</span></div>
<div class="cl" style="top:567px">            <span style="color:#a6e2ff">&quot;userActions&quot;</span><span style="color:#d8d8d8">:</span> <span style="color:#d8d8d8">[</span></div>
<div class="cl" style="top:585px">                <span style="color:#d8d8d8">{</span></div>
<div class="cl" style="top:603px">                    <span style="color:#a6e2ff">&quot;context&quot;</span><span style="color:#d8d8d8">:</span> <span style="color:#d8d8d8">[</span></div>
<div class="cl" style="top:621px">                        <span style="color:#d8d8d8">{</span></div>
<div class="cl" style="top:639px">                            <span style="color:#a6e2ff">&quot;label&quot;</span><span style="color:#d8d8d8">:</span> <span style="color:#d99a7e">&quot;send email&quot;</span><span style="color:#d8d8d8">,</span></div>
<div class="cl" style="top:657px">                            <span style="color:#a6e2ff">&quot;type&quot;</span><span style="color:#d8d8d8">:</span> <span style="color:#d99a7e">&quot;SECONDARY&quot;</span><span style="color:#d8d8d8">,</span></div>
<div class="cl" style="top:675px">                            <span style="color:#a6e2ff">&quot;modules&quot;</span><span style="color:#d8d8d8">:</span> <span style="color:#d8d8d8">[</span></div>
<div class="cl" style="top:693px">                                <span style="color:#d99a7e">&quot;adminconsole&quot;</span><span style="color:#d8d8d8">,</span></div>
<div class="cl" style="top:711px">                                <span style="color:#d99a7e">&quot;servicepoint&quot;</span></div>
<div class="cl" style="top:729px">                            <span style="color:#d8d8d8">]</span><span style="color:#d8d8d8">,</span></div>
<div class="cl" style="top:747px">                            <span style="color:#a6e2ff">&quot;confirm&quot;</span><span style="color:#d8d8d8">:</span> <span style="color:#5aa1dc">false</span></div>
<div class="cl" style="top:765px">                        <span style="color:#d8d8d8">}</span></div>
<div class="cl" style="top:783px">                    <span style="color:#d8d8d8">]</span><span style="color:#d8d8d8">,</span></div>
<div class="cl" style="top:801px">                    <span style="color:#a6e2ff">&quot;attributes&quot;</span><span style="color:#d8d8d8">:</span> <span style="color:#d8d8d8">[</span><span style="color:#d8d8d8">]</span></div>
<div class="cl" style="top:819px">                <span style="color:#d8d8d8">}</span></div>
<div class="cl" style="top:837px">            <span style="color:#d8d8d8">]</span></div>
<div class="cl" style="top:855px">        <span style="color:#d8d8d8">}</span><span style="color:#d8d8d8">,</span></div>
<div class="cl" style="top:873px">     <span style="color:#d8d8d8">{</span></div>
<div class="cl" style="top:891px">      <span style="color:#a6e2ff">&quot;name&quot;</span><span style="color:#d8d8d8">:</span> <span style="color:#d99a7e">&quot;SendEmailForOrder&quot;</span><span style="color:#d8d8d8">,</span></div>
<div class="cl" style="top:909px">      <span style="color:#a6e2ff">&quot;description&quot;</span><span style="color:#d8d8d8">:</span> <span style="color:#d99a7e">&quot;Sends email for order entity&quot;</span><span style="color:#d8d8d8">,</span></div>
<div class="cl" style="top:927px">      <span style="color:#a6e2ff">&quot;type&quot;</span><span style="color:#d8d8d8">:</span> <span style="color:#d99a7e">&quot;ORDER&quot;</span><span style="color:#d8d8d8">,</span></div>
<div class="cl" style="top:945px">      <span style="color:#a6e2ff">&quot;subtype&quot;</span><span style="color:#d8d8d8">:</span> <span style="color:#d99a7e">&quot;HD&quot;</span><span style="color:#d8d8d8">,</span></div>
<div class="cl" style="top:963px">      <span style="color:#a6e2ff">&quot;eventType&quot;</span><span style="color:#d8d8d8">:</span> <span style="color:#d99a7e">&quot;NORMAL&quot;</span><span style="color:#d8d8d8">,</span></div>
<div class="cl" style="top:981px">      <span style="color:#a6e2ff">&quot;rules&quot;</span><span style="color:#d8d8d8">:</span> <span style="color:#d8d8d8">[</span></div>
<div class="cl" style="top:999px">        <span style="color:#d8d8d8">{</span></div>
<div class="cl" style="top:1017px">          <span style="color:#a6e2ff">&quot;name&quot;</span><span style="color:#d8d8d8">:</span> <span style="color:#d99a7e">&quot;RANDY.EMAIL.SendEmailFromEvent&quot;</span><span style="color:#d8d8d8">,</span></div>
<div class="cl" style="top:1035px">          <span style="color:#a6e2ff">&quot;props&quot;</span><span style="color:#d8d8d8">:</span> <span style="color:#5aa1dc">null</span></div>
<div class="cl" style="top:1053px">        <span style="color:#d8d8d8">}</span></div>
<div class="cl" style="top:1071px">      <span style="color:#d8d8d8">]</span><span style="color:#d8d8d8">,</span></div>
      <svg class="abs" style="left:0;top:0" width="1920" height="1058"><g opacity="0.33"><rect x="1822" y="110" width="10" height="1.7" fill="#d99a7e"/><rect x="1832" y="110" width="1" height="1.7" fill="#d8d8d8"/><rect x="1822" y="112" width="10" height="1.7" fill="#d99a7e"/><rect x="1832" y="112" width="1" height="1.7" fill="#d8d8d8"/><rect x="1822" y="114" width="10" height="1.7" fill="#d99a7e"/><rect x="1818" y="116" width="1" height="1.7" fill="#d8d8d8"/><rect x="1819" y="116" width="1" height="1.7" fill="#d8d8d8"/><rect x="1818" y="118" width="12" height="1.7" fill="#a6e2ff"/><rect x="1830" y="118" width="1" height="1.7" fill="#d8d8d8"/><rect x="1832" y="118" width="32" height="1.7" fill="#d99a7e"/><rect x="1814" y="120" width="1" height="1.7" fill="#d8d8d8"/><rect x="1810" y="122" width="1" height="1.7" fill="#d8d8d8"/><rect x="1806" y="124" width="1" height="1.7" fill="#d8d8d8"/><rect x="1807" y="124" width="1" height="1.7" fill="#d8d8d8"/><rect x="1806" y="126" width="10" height="1.7" fill="#a6e2ff"/><rect x="1816" y="126" width="1" height="1.7" fill="#d8d8d8"/><rect x="1818" y="126" width="1" height="1.7" fill="#d8d8d8"/><rect x="1810" y="128" width="1" height="1.7" fill="#d8d8d8"/><rect x="1814" y="130" width="8" height="1.7" fill="#a6e2ff"/><rect x="1822" y="130" width="1" height="1.7" fill="#d8d8d8"/><rect x="1824" y="130" width="12" height="1.7" fill="#d99a7e"/><rect x="1810" y="132" width="1" height="1.7" fill="#d8d8d8"/><rect x="1806" y="134" width="1" height="1.7" fill="#d8d8d8"/><rect x="1807" y="134" width="1" height="1.7" fill="#d8d8d8"/><rect x="1806" y="136" width="13" height="1.7" fill="#a6e2ff"/><rect x="1819" y="136" width="1" height="1.7" fill="#d8d8d8"/><rect x="1821" y="136" width="1" height="1.7" fill="#d8d8d8"/><rect x="1822" y="136" width="1" height="1.7" fill="#d8d8d8"/><rect x="1802" y="138" width="1" height="1.7" fill="#d8d8d8"/><rect x="1803" y="138" width="1" height="1.7" fill="#d8d8d8"/><rect x="1802" y="140" width="1" height="1.7" fill="#d8d8d8"/><rect x="1806" y="142" width="6" height="1.7" fill="#a6e2ff"/><rect x="1812" y="142" width="1" height="1.7" fill="#d8d8d8"/><rect x="1814" y="142" width="32" height="1.7" fill="#d99a7e"/><rect x="1846" y="142" width="1" height="1.7" fill="#d8d8d8"/><rect x="1806" y="144" width="13" height="1.7" fill="#a6e2ff"/><rect x="1819" y="144" width="1" height="1.7" fill="#d8d8d8"/><rect x="1821" y="144" width="26" height="1.7" fill="#d99a7e"/><rect x="1847" y="144" width="1" height="1.7" fill="#d8d8d8"/><rect x="1806" y="146" width="6" height="1.7" fill="#a6e2ff"/><rect x="1812" y="146" width="1" height="1.7" fill="#d8d8d8"/><rect x="1814" y="146" width="7" height="1.7" fill="#d99a7e"/><rect x="1821" y="146" width="1" height="1.7" fill="#d8d8d8"/><rect x="1806" y="148" width="9" height="1.7" fill="#a6e2ff"/><rect x="1815" y="148" width="1" height="1.7" fill="#d8d8d8"/><rect x="1817" y="148" width="4" height="1.7" fill="#d99a7e"/><rect x="1821" y="148" width="1" height="1.7" fill="#d8d8d8"/><rect x="1806" y="150" width="11" height="1.7" fill="#a6e2ff"/><rect x="1817" y="150" width="1" height="1.7" fill="#d8d8d8"/><rect x="1819" y="150" width="8" height="1.7" fill="#d99a7e"/><rect x="1827" y="150" width="1" height="1.7" fill="#d8d8d8"/><rect x="1806" y="152" width="7" height="1.7" fill="#a6e2ff"/><rect x="1813" y="152" width="1" height="1.7" fill="#d8d8d8"/><rect x="1815" y="152" width="1" height="1.7" fill="#d8d8d8"/><rect x="1810" y="154" width="1" height="1.7" fill="#d8d8d8"/><rect x="1814" y="156" width="6" height="1.7" fill="#a6e2ff"/><rect x="1820" y="156" width="1" height="1.7" fill="#d8d8d8"/><rect x="1822" y="156" width="31" height="1.7" fill="#d99a7e"/><rect x="1853" y="156" width="1" height="1.7" fill="#d8d8d8"/><rect x="1814" y="158" width="7" height="1.7" fill="#a6e2ff"/><rect x="1821" y="158" width="1" height="1.7" fill="#d8d8d8"/><rect x="1823" y="158" width="1" height="1.7" fill="#d8d8d8"/><rect x="1818" y="160" width="9" height="1.7" fill="#a6e2ff"/><rect x="1827" y="160" width="1" height="1.7" fill="#d8d8d8"/><rect x="1829" y="160" width="29" height="1.7" fill="#d99a7e"/><rect x="1814" y="162" width="1" height="1.7" fill="#d8d8d8"/><rect x="1810" y="164" width="1" height="1.7" fill="#d8d8d8"/><rect x="1806" y="166" width="1" height="1.7" fill="#d8d8d8"/><rect x="1807" y="166" width="1" height="1.7" fill="#d8d8d8"/><rect x="1806" y="168" width="10" height="1.7" fill="#a6e2ff"/><rect x="1816" y="168" width="1" height="1.7" fill="#d8d8d8"/><rect x="1818" y="168" width="1" height="1.7" fill="#d8d8d8"/><rect x="1810" y="170" width="1" height="1.7" fill="#d8d8d8"/><rect x="1814" y="172" width="8" height="1.7" fill="#a6e2ff"/><rect x="1822" y="172" width="1" height="1.7" fill="#d8d8d8"/><rect x="1824" y="172" width="12" height="1.7" fill="#d99a7e"/><rect x="1810" y="174" width="1" height="1.7" fill="#d8d8d8"/><rect x="1806" y="176" width="1" height="1.7" fill="#d8d8d8"/><rect x="1807" y="176" width="1" height="1.7" fill="#d8d8d8"/><rect x="1806" y="178" width="13" height="1.7" fill="#a6e2ff"/><rect x="1819" y="178" width="1" height="1.7" fill="#d8d8d8"/><rect x="1821" y="178" width="1" height="1.7" fill="#d8d8d8"/><rect x="1822" y="178" width="1" height="1.7" fill="#d8d8d8"/><rect x="1802" y="180" width="1" height="1.7" fill="#d8d8d8"/><rect x="1803" y="180" width="1" height="1.7" fill="#d8d8d8"/><rect x="1802" y="182" width="1" height="1.7" fill="#d8d8d8"/><rect x="1806" y="184" width="6" height="1.7" fill="#a6e2ff"/><rect x="1812" y="184" width="1" height="1.7" fill="#d8d8d8"/><rect x="1814" y="184" width="19" height="1.7" fill="#d99a7e"/><rect x="1833" y="184" width="1" height="1.7" fill="#d8d8d8"/><rect x="1806" y="186" width="13" height="1.7" fill="#a6e2ff"/><rect x="1819" y="186" width="1" height="1.7" fill="#d8d8d8"/><rect x="1821" y="186" width="21" height="1.7" fill="#d99a7e"/><rect x="1842" y="186" width="1" height="1.7" fill="#d8d8d8"/><rect x="1806" y="188" width="6" height="1.7" fill="#a6e2ff"/><rect x="1812" y="188" width="1" height="1.7" fill="#d8d8d8"/><rect x="1814" y="188" width="7" height="1.7" fill="#d99a7e"/><rect x="1821" y="188" width="1" height="1.7" fill="#d8d8d8"/><rect x="1806" y="190" width="11" height="1.7" fill="#a6e2ff"/><rect x="1817" y="190" width="1" height="1.7" fill="#d8d8d8"/><rect x="1819" y="190" width="8" height="1.7" fill="#d99a7e"/><rect x="1827" y="190" width="1" height="1.7" fill="#d8d8d8"/><rect x="1806" y="192" width="7" height="1.7" fill="#a6e2ff"/><rect x="1813" y="192" width="1" height="1.7" fill="#d8d8d8"/><rect x="1815" y="192" width="1" height="1.7" fill="#d8d8d8"/><rect x="1810" y="194" width="1" height="1.7" fill="#d8d8d8"/><rect x="1814" y="196" width="6" height="1.7" fill="#a6e2ff"/><rect x="1820" y="196" width="1" height="1.7" fill="#d8d8d8"/><rect x="1822" y="196" width="31" height="1.7" fill="#d99a7e"/><rect x="1853" y="196" width="1" height="1.7" fill="#d8d8d8"/><rect x="1814" y="198" width="7" height="1.7" fill="#a6e2ff"/><rect x="1821" y="198" width="1" height="1.7" fill="#d8d8d8"/><rect x="1823" y="198" width="1" height="1.7" fill="#d8d8d8"/><rect x="1818" y="200" width="9" height="1.7" fill="#a6e2ff"/><rect x="1827" y="200" width="1" height="1.7" fill="#d8d8d8"/><rect x="1829" y="200" width="11" height="1.7" fill="#d99a7e"/><rect x="1814" y="202" width="1" height="1.7" fill="#d8d8d8"/><rect x="1810" y="204" width="1" height="1.7" fill="#d8d8d8"/><rect x="1811" y="204" width="1" height="1.7" fill="#d8d8d8"/><rect x="1810" y="206" width="1" height="1.7" fill="#d8d8d8"/><rect x="1814" y="208" width="6" height="1.7" fill="#a6e2ff"/><rect x="1820" y="208" width="1" height="1.7" fill="#d8d8d8"/><rect x="1822" y="208" width="42" height="1.7" fill="#d99a7e"/><rect x="1864" y="208" width="1" height="1.7" fill="#d8d8d8"/><rect x="1814" y="210" width="7" height="1.7" fill="#a6e2ff"/><rect x="1821" y="210" width="1" height="1.7" fill="#d8d8d8"/><rect x="1823" y="210" width="1" height="1.7" fill="#d8d8d8"/><rect x="1818" y="212" width="12" height="1.7" fill="#a6e2ff"/><rect x="1830" y="212" width="1" height="1.7" fill="#d8d8d8"/><rect x="1832" y="212" width="18" height="1.7" fill="#d99a7e"/><rect x="1814" y="214" width="1" height="1.7" fill="#d8d8d8"/><rect x="1810" y="216" width="1" height="1.7" fill="#d8d8d8"/><rect x="1806" y="218" width="1" height="1.7" fill="#d8d8d8"/><rect x="1807" y="218" width="1" height="1.7" fill="#d8d8d8"/><rect x="1806" y="220" width="10" height="1.7" fill="#a6e2ff"/><rect x="1816" y="220" width="1" height="1.7" fill="#d8d8d8"/><rect x="1818" y="220" width="1" height="1.7" fill="#d8d8d8"/><rect x="1810" y="222" width="1" height="1.7" fill="#d8d8d8"/><rect x="1814" y="224" width="8" height="1.7" fill="#a6e2ff"/><rect x="1822" y="224" width="1" height="1.7" fill="#d8d8d8"/><rect x="1824" y="224" width="19" height="1.7" fill="#d99a7e"/><rect x="1810" y="226" width="1" height="1.7" fill="#d8d8d8"/><rect x="1806" y="228" width="1" height="1.7" fill="#d8d8d8"/><rect x="1807" y="228" width="1" height="1.7" fill="#d8d8d8"/><rect x="1806" y="230" width="13" height="1.7" fill="#a6e2ff"/><rect x="1819" y="230" width="1" height="1.7" fill="#d8d8d8"/><rect x="1821" y="230" width="1" height="1.7" fill="#d8d8d8"/><rect x="1810" y="232" width="1" height="1.7" fill="#d8d8d8"/><rect x="1814" y="234" width="11" height="1.7" fill="#a6e2ff"/><rect x="1825" y="234" width="1" height="1.7" fill="#d8d8d8"/><rect x="1827" y="234" width="18" height="1.7" fill="#d99a7e"/><rect x="1845" y="234" width="1" height="1.7" fill="#d8d8d8"/><rect x="1814" y="236" width="9" height="1.7" fill="#a6e2ff"/><rect x="1823" y="236" width="1" height="1.7" fill="#d8d8d8"/><rect x="1825" y="236" width="1" height="1.7" fill="#d8d8d8"/><rect x="1818" y="238" width="1" height="1.7" fill="#d8d8d8"/><rect x="1822" y="240" width="7" height="1.7" fill="#a6e2ff"/><rect x="1829" y="240" width="1" height="1.7" fill="#d8d8d8"/><rect x="1831" y="240" width="10" height="1.7" fill="#d99a7e"/><rect x="1841" y="240" width="1" height="1.7" fill="#d8d8d8"/><rect x="1822" y="242" width="6" height="1.7" fill="#a6e2ff"/><rect x="1828" y="242" width="1" height="1.7" fill="#d8d8d8"/><rect x="1830" y="242" width="9" height="1.7" fill="#d99a7e"/><rect x="1839" y="242" width="1" height="1.7" fill="#d8d8d8"/><rect x="1822" y="244" width="9" height="1.7" fill="#a6e2ff"/><rect x="1831" y="244" width="1" height="1.7" fill="#d8d8d8"/><rect x="1833" y="244" width="1" height="1.7" fill="#d8d8d8"/><rect x="1826" y="246" width="13" height="1.7" fill="#d99a7e"/><rect x="1822" y="248" width="1" height="1.7" fill="#d8d8d8"/><rect x="1823" y="248" width="1" height="1.7" fill="#d8d8d8"/><rect x="1822" y="250" width="9" height="1.7" fill="#a6e2ff"/><rect x="1831" y="250" width="1" height="1.7" fill="#d8d8d8"/><rect x="1833" y="250" width="5" height="1.7" fill="#5aa1dc"/><rect x="1818" y="252" width="1" height="1.7" fill="#d8d8d8"/><rect x="1814" y="254" width="1" height="1.7" fill="#d8d8d8"/><rect x="1815" y="254" width="1" height="1.7" fill="#d8d8d8"/><rect x="1814" y="256" width="12" height="1.7" fill="#a6e2ff"/><rect x="1826" y="256" width="1" height="1.7" fill="#d8d8d8"/><rect x="1828" y="256" width="1" height="1.7" fill="#d8d8d8"/><rect x="1829" y="256" width="1" height="1.7" fill="#d8d8d8"/><rect x="1810" y="258" width="1" height="1.7" fill="#d8d8d8"/><rect x="1806" y="260" width="1" height="1.7" fill="#d8d8d8"/><rect x="1802" y="262" width="1" height="1.7" fill="#d8d8d8"/><rect x="1803" y="262" width="1" height="1.7" fill="#d8d8d8"/><rect x="1802" y="264" width="1" height="1.7" fill="#d8d8d8"/><rect x="1806" y="266" width="6" height="1.7" fill="#a6e2ff"/><rect x="1812" y="266" width="1" height="1.7" fill="#d8d8d8"/><rect x="1814" y="266" width="28" height="1.7" fill="#d99a7e"/><rect x="1842" y="266" width="1" height="1.7" fill="#d8d8d8"/><rect x="1806" y="268" width="13" height="1.7" fill="#a6e2ff"/><rect x="1819" y="268" width="1" height="1.7" fill="#d8d8d8"/><rect x="1821" y="268" width="21" height="1.7" fill="#d99a7e"/><rect x="1842" y="268" width="1" height="1.7" fill="#d8d8d8"/><rect x="1806" y="270" width="6" height="1.7" fill="#a6e2ff"/><rect x="1812" y="270" width="1" height="1.7" fill="#d8d8d8"/><rect x="1814" y="270" width="7" height="1.7" fill="#d99a7e"/><rect x="1821" y="270" width="1" height="1.7" fill="#d8d8d8"/><rect x="1806" y="272" width="9" height="1.7" fill="#a6e2ff"/><rect x="1815" y="272" width="1" height="1.7" fill="#d8d8d8"/><rect x="1817" y="272" width="4" height="1.7" fill="#d99a7e"/><rect x="1821" y="272" width="1" height="1.7" fill="#d8d8d8"/><rect x="1806" y="274" width="11" height="1.7" fill="#a6e2ff"/><rect x="1817" y="274" width="1" height="1.7" fill="#d8d8d8"/><rect x="1819" y="274" width="8" height="1.7" fill="#d99a7e"/><rect x="1827" y="274" width="1" height="1.7" fill="#d8d8d8"/><rect x="1806" y="276" width="7" height="1.7" fill="#a6e2ff"/><rect x="1813" y="276" width="1" height="1.7" fill="#d8d8d8"/><rect x="1815" y="276" width="1" height="1.7" fill="#d8d8d8"/><rect x="1810" y="278" width="1" height="1.7" fill="#d8d8d8"/><rect x="1814" y="280" width="6" height="1.7" fill="#a6e2ff"/><rect x="1820" y="280" width="1" height="1.7" fill="#d8d8d8"/><rect x="1822" y="280" width="46" height="1.7" fill="#d99a7e"/><rect x="1868" y="280" width="1" height="1.7" fill="#d8d8d8"/><rect x="1814" y="282" width="7" height="1.7" fill="#a6e2ff"/><rect x="1821" y="282" width="1" height="1.7" fill="#d8d8d8"/><rect x="1823" y="282" width="1" height="1.7" fill="#d8d8d8"/><rect x="1818" y="284" width="14" height="1.7" fill="#a6e2ff"/><rect x="1832" y="284" width="1" height="1.7" fill="#d8d8d8"/><rect x="1834" y="284" width="1" height="1.7" fill="#d8d8d8"/><rect x="1822" y="286" width="1" height="1.7" fill="#d8d8d8"/><rect x="1826" y="288" width="6" height="1.7" fill="#a6e2ff"/><rect x="1832" y="288" width="1" height="1.7" fill="#d8d8d8"/><rect x="1834" y="288" width="17" height="1.7" fill="#d99a7e"/><rect x="1851" y="288" width="1" height="1.7" fill="#d8d8d8"/><rect x="1826" y="290" width="6" height="1.7" fill="#a6e2ff"/><rect x="1832" y="290" width="1" height="1.7" fill="#d8d8d8"/><rect x="1834" y="290" width="8" height="1.7" fill="#d99a7e"/><rect x="1822" y="292" width="1" height="1.7" fill="#d8d8d8"/><rect x="1818" y="294" width="1" height="1.7" fill="#d8d8d8"/><rect x="1814" y="296" width="1" height="1.7" fill="#d8d8d8"/><rect x="1810" y="298" width="1" height="1.7" fill="#d8d8d8"/><rect x="1811" y="298" width="1" height="1.7" fill="#d8d8d8"/><rect x="1810" y="300" width="1" height="1.7" fill="#d8d8d8"/><rect x="1814" y="302" width="6" height="1.7" fill="#a6e2ff"/><rect x="1820" y="302" width="1" height="1.7" fill="#d8d8d8"/><rect x="1822" y="302" width="31" height="1.7" fill="#d99a7e"/><rect x="1853" y="302" width="1" height="1.7" fill="#d8d8d8"/><rect x="1814" y="304" width="7" height="1.7" fill="#a6e2ff"/><rect x="1821" y="304" width="1" height="1.7" fill="#d8d8d8"/><rect x="1823" y="304" width="1" height="1.7" fill="#d8d8d8"/><rect x="1818" y="306" width="9" height="1.7" fill="#a6e2ff"/><rect x="1827" y="306" width="1" height="1.7" fill="#d8d8d8"/><rect x="1829" y="306" width="11" height="1.7" fill="#d99a7e"/><rect x="1814" y="308" width="1" height="1.7" fill="#d8d8d8"/><rect x="1810" y="310" width="1" height="1.7" fill="#d8d8d8"/><rect x="1811" y="310" width="1" height="1.7" fill="#d8d8d8"/><rect x="1810" y="312" width="1" height="1.7" fill="#d8d8d8"/><rect x="1814" y="314" width="6" height="1.7" fill="#a6e2ff"/><rect x="1820" y="314" width="1" height="1.7" fill="#d8d8d8"/><rect x="1822" y="314" width="42" height="1.7" fill="#d99a7e"/><rect x="1864" y="314" width="1" height="1.7" fill="#d8d8d8"/><rect x="1814" y="316" width="7" height="1.7" fill="#a6e2ff"/><rect x="1821" y="316" width="1" height="1.7" fill="#d8d8d8"/><rect x="1823" y="316" width="1" height="1.7" fill="#d8d8d8"/><rect x="1818" y="318" width="12" height="1.7" fill="#a6e2ff"/><rect x="1830" y="318" width="1" height="1.7" fill="#d8d8d8"/><rect x="1832" y="318" width="17" height="1.7" fill="#d99a7e"/><rect x="1814" y="320" width="1" height="1.7" fill="#d8d8d8"/><rect x="1810" y="322" width="1" height="1.7" fill="#d8d8d8"/><rect x="1806" y="324" width="1" height="1.7" fill="#d8d8d8"/><rect x="1807" y="324" width="1" height="1.7" fill="#d8d8d8"/><rect x="1806" y="326" width="10" height="1.7" fill="#a6e2ff"/><rect x="1816" y="326" width="1" height="1.7" fill="#d8d8d8"/><rect x="1818" y="326" width="1" height="1.7" fill="#d8d8d8"/><rect x="1810" y="328" width="1" height="1.7" fill="#d8d8d8"/><rect x="1814" y="330" width="8" height="1.7" fill="#a6e2ff"/><rect x="1822" y="330" width="1" height="1.7" fill="#d8d8d8"/><rect x="1824" y="330" width="19" height="1.7" fill="#d99a7e"/><rect x="1810" y="332" width="1" height="1.7" fill="#d8d8d8"/><rect x="1806" y="334" width="1" height="1.7" fill="#d8d8d8"/><rect x="1807" y="334" width="1" height="1.7" fill="#d8d8d8"/><rect x="1806" y="336" width="13" height="1.7" fill="#a6e2ff"/><rect x="1819" y="336" width="1" height="1.7" fill="#d8d8d8"/><rect x="1821" y="336" width="1" height="1.7" fill="#d8d8d8"/><rect x="1810" y="338" width="1" height="1.7" fill="#d8d8d8"/><rect x="1814" y="340" width="11" height="1.7" fill="#a6e2ff"/><rect x="1825" y="340" width="1" height="1.7" fill="#d8d8d8"/><rect x="1827" y="340" width="18" height="1.7" fill="#d99a7e"/><rect x="1845" y="340" width="1" height="1.7" fill="#d8d8d8"/><rect x="1814" y="342" width="9" height="1.7" fill="#a6e2ff"/><rect x="1823" y="342" width="1" height="1.7" fill="#d8d8d8"/><rect x="1825" y="342" width="1" height="1.7" fill="#d8d8d8"/><rect x="1818" y="344" width="1" height="1.7" fill="#d8d8d8"/><rect x="1822" y="346" width="7" height="1.7" fill="#a6e2ff"/><rect x="1829" y="346" width="1" height="1.7" fill="#d8d8d8"/><rect x="1831" y="346" width="23" height="1.7" fill="#d99a7e"/><rect x="1854" y="346" width="1" height="1.7" fill="#d8d8d8"/><rect x="1822" y="348" width="6" height="1.7" fill="#a6e2ff"/><rect x="1828" y="348" width="1" height="1.7" fill="#d8d8d8"/><rect x="1830" y="348" width="11" height="1.7" fill="#d99a7e"/><rect x="1841" y="348" width="1" height="1.7" fill="#d8d8d8"/><rect x="1822" y="350" width="9" height="1.7" fill="#a6e2ff"/><rect x="1831" y="350" width="1" height="1.7" fill="#d8d8d8"/><rect x="1833" y="350" width="1" height="1.7" fill="#d8d8d8"/><rect x="1826" y="352" width="13" height="1.7" fill="#d99a7e"/><rect x="1822" y="354" width="1" height="1.7" fill="#d8d8d8"/><rect x="1823" y="354" width="1" height="1.7" fill="#d8d8d8"/><rect x="1822" y="356" width="9" height="1.7" fill="#a6e2ff"/><rect x="1831" y="356" width="1" height="1.7" fill="#d8d8d8"/><rect x="1833" y="356" width="5" height="1.7" fill="#5aa1dc"/><rect x="1818" y="358" width="1" height="1.7" fill="#d8d8d8"/><rect x="1814" y="360" width="1" height="1.7" fill="#d8d8d8"/><rect x="1815" y="360" width="1" height="1.7" fill="#d8d8d8"/><rect x="1814" y="362" width="12" height="1.7" fill="#a6e2ff"/><rect x="1826" y="362" width="1" height="1.7" fill="#d8d8d8"/><rect x="1828" y="362" width="1" height="1.7" fill="#d8d8d8"/><rect x="1818" y="364" width="1" height="1.7" fill="#d8d8d8"/><rect x="1822" y="366" width="6" height="1.7" fill="#a6e2ff"/><rect x="1828" y="366" width="1" height="1.7" fill="#d8d8d8"/><rect x="1830" y="366" width="17" height="1.7" fill="#d99a7e"/><rect x="1847" y="366" width="1" height="1.7" fill="#d8d8d8"/><rect x="1822" y="368" width="7" height="1.7" fill="#a6e2ff"/><rect x="1829" y="368" width="1" height="1.7" fill="#d8d8d8"/><rect x="1831" y="368" width="16" height="1.7" fill="#d99a7e"/><rect x="1847" y="368" width="1" height="1.7" fill="#d8d8d8"/><rect x="1822" y="370" width="6" height="1.7" fill="#a6e2ff"/><rect x="1828" y="370" width="1" height="1.7" fill="#d8d8d8"/><rect x="1830" y="370" width="8" height="1.7" fill="#d99a7e"/><rect x="1838" y="370" width="1" height="1.7" fill="#d8d8d8"/><rect x="1822" y="372" width="10" height="1.7" fill="#a6e2ff"/><rect x="1832" y="372" width="1" height="1.7" fill="#d8d8d8"/><rect x="1834" y="372" width="15" height="1.7" fill="#d99a7e"/><rect x="1849" y="372" width="1" height="1.7" fill="#d8d8d8"/><rect x="1822" y="374" width="12" height="1.7" fill="#a6e2ff"/><rect x="1834" y="374" width="1" height="1.7" fill="#d8d8d8"/><rect x="1836" y="374" width="4" height="1.7" fill="#5aa1dc"/><rect x="1818" y="376" width="1" height="1.7" fill="#d8d8d8"/><rect x="1814" y="378" width="1" height="1.7" fill="#d8d8d8"/><rect x="1810" y="380" width="1" height="1.7" fill="#d8d8d8"/><rect x="1806" y="382" width="1" height="1.7" fill="#d8d8d8"/><rect x="1802" y="384" width="1" height="1.7" fill="#d8d8d8"/><rect x="1803" y="384" width="1" height="1.7" fill="#d8d8d8"/><rect x="1802" y="386" width="1" height="1.7" fill="#d8d8d8"/><rect x="1806" y="388" width="6" height="1.7" fill="#a6e2ff"/><rect x="1812" y="388" width="1" height="1.7" fill="#d8d8d8"/><rect x="1814" y="388" width="18" height="1.7" fill="#d99a7e"/><rect x="1832" y="388" width="1" height="1.7" fill="#d8d8d8"/><rect x="1806" y="390" width="13" height="1.7" fill="#a6e2ff"/><rect x="1819" y="390" width="1" height="1.7" fill="#d8d8d8"/><rect x="1821" y="390" width="63" height="1.7" fill="#d99a7e"/><rect x="1884" y="390" width="1" height="1.7" fill="#d8d8d8"/><rect x="1806" y="392" width="6" height="1.7" fill="#a6e2ff"/><rect x="1812" y="392" width="1" height="1.7" fill="#d8d8d8"/><rect x="1814" y="392" width="7" height="1.7" fill="#d99a7e"/><rect x="1821" y="392" width="1" height="1.7" fill="#d8d8d8"/><rect x="1806" y="394" width="9" height="1.7" fill="#a6e2ff"/><rect x="1815" y="394" width="1" height="1.7" fill="#d8d8d8"/><rect x="1817" y="394" width="4" height="1.7" fill="#d99a7e"/><rect x="1821" y="394" width="1" height="1.7" fill="#d8d8d8"/><rect x="1806" y="396" width="11" height="1.7" fill="#a6e2ff"/><rect x="1817" y="396" width="1" height="1.7" fill="#d8d8d8"/><rect x="1819" y="396" width="8" height="1.7" fill="#d99a7e"/><rect x="1827" y="396" width="1" height="1.7" fill="#d8d8d8"/><rect x="1806" y="398" width="7" height="1.7" fill="#a6e2ff"/><rect x="1813" y="398" width="1" height="1.7" fill="#d8d8d8"/><rect x="1815" y="398" width="1" height="1.7" fill="#d8d8d8"/><rect x="1810" y="400" width="1" height="1.7" fill="#d8d8d8"/><rect x="1814" y="402" width="6" height="1.7" fill="#a6e2ff"/><rect x="1820" y="402" width="1" height="1.7" fill="#d8d8d8"/><rect x="1822" y="402" width="53" height="1.7" fill="#d99a7e"/><rect x="1875" y="402" width="1" height="1.7" fill="#d8d8d8"/><rect x="1814" y="404" width="7" height="1.7" fill="#a6e2ff"/><rect x="1821" y="404" width="1" height="1.7" fill="#d8d8d8"/><rect x="1823" y="404" width="1" height="1.7" fill="#d8d8d8"/><rect x="1818" y="406" width="8" height="1.7" fill="#a6e2ff"/><rect x="1826" y="406" width="1" height="1.7" fill="#d8d8d8"/><rect x="1828" y="406" width="1" height="1.7" fill="#d8d8d8"/><rect x="1822" y="408" width="11" height="1.7" fill="#d99a7e"/><rect x="1818" y="410" width="1" height="1.7" fill="#d8d8d8"/><rect x="1819" y="410" width="1" height="1.7" fill="#d8d8d8"/><rect x="1818" y="412" width="12" height="1.7" fill="#a6e2ff"/><rect x="1830" y="412" width="1" height="1.7" fill="#d8d8d8"/><rect x="1832" y="412" width="22" height="1.7" fill="#d99a7e"/><rect x="1814" y="414" width="1" height="1.7" fill="#d8d8d8"/><rect x="1810" y="416" width="1" height="1.7" fill="#d8d8d8"/><rect x="1806" y="418" width="1" height="1.7" fill="#d8d8d8"/><rect x="1807" y="418" width="1" height="1.7" fill="#d8d8d8"/><rect x="1806" y="420" width="10" height="1.7" fill="#a6e2ff"/><rect x="1816" y="420" width="1" height="1.7" fill="#d8d8d8"/><rect x="1818" y="420" width="1" height="1.7" fill="#d8d8d8"/><rect x="1810" y="422" width="1" height="1.7" fill="#d8d8d8"/><rect x="1814" y="424" width="8" height="1.7" fill="#a6e2ff"/><rect x="1822" y="424" width="1" height="1.7" fill="#d8d8d8"/><rect x="1824" y="424" width="29" height="1.7" fill="#d99a7e"/><rect x="1810" y="426" width="1" height="1.7" fill="#d8d8d8"/><rect x="1806" y="428" width="1" height="1.7" fill="#d8d8d8"/><rect x="1807" y="428" width="1" height="1.7" fill="#d8d8d8"/><rect x="1806" y="430" width="13" height="1.7" fill="#a6e2ff"/><rect x="1819" y="430" width="1" height="1.7" fill="#d8d8d8"/><rect x="1821" y="430" width="1" height="1.7" fill="#d8d8d8"/><rect x="1822" y="430" width="1" height="1.7" fill="#d8d8d8"/><rect x="1802" y="432" width="1" height="1.7" fill="#d8d8d8"/><rect x="1803" y="432" width="1" height="1.7" fill="#d8d8d8"/><rect x="1802" y="434" width="1" height="1.7" fill="#d8d8d8"/><rect x="1806" y="436" width="6" height="1.7" fill="#a6e2ff"/><rect x="1812" y="436" width="1" height="1.7" fill="#d8d8d8"/><rect x="1814" y="436" width="21" height="1.7" fill="#d99a7e"/><rect x="1835" y="436" width="1" height="1.7" fill="#d8d8d8"/><rect x="1806" y="438" width="13" height="1.7" fill="#a6e2ff"/><rect x="1819" y="438" width="1" height="1.7" fill="#d8d8d8"/><rect x="1821" y="438" width="63" height="1.7" fill="#d99a7e"/><rect x="1884" y="438" width="1" height="1.7" fill="#d8d8d8"/><rect x="1806" y="440" width="6" height="1.7" fill="#a6e2ff"/><rect x="1812" y="440" width="1" height="1.7" fill="#d8d8d8"/><rect x="1814" y="440" width="7" height="1.7" fill="#d99a7e"/><rect x="1821" y="440" width="1" height="1.7" fill="#d8d8d8"/><rect x="1806" y="442" width="11" height="1.7" fill="#a6e2ff"/><rect x="1817" y="442" width="1" height="1.7" fill="#d8d8d8"/><rect x="1819" y="442" width="8" height="1.7" fill="#d99a7e"/><rect x="1827" y="442" width="1" height="1.7" fill="#d8d8d8"/><rect x="1806" y="444" width="7" height="1.7" fill="#a6e2ff"/><rect x="1813" y="444" width="1" height="1.7" fill="#d8d8d8"/><rect x="1815" y="444" width="1" height="1.7" fill="#d8d8d8"/><rect x="1810" y="446" width="1" height="1.7" fill="#d8d8d8"/><rect x="1814" y="448" width="6" height="1.7" fill="#a6e2ff"/><rect x="1820" y="448" width="1" height="1.7" fill="#d8d8d8"/><rect x="1822" y="448" width="31" height="1.7" fill="#d99a7e"/><rect x="1853" y="448" width="1" height="1.7" fill="#d8d8d8"/><rect x="1814" y="450" width="7" height="1.7" fill="#a6e2ff"/><rect x="1821" y="450" width="1" height="1.7" fill="#d8d8d8"/><rect x="1823" y="450" width="1" height="1.7" fill="#d8d8d8"/><rect x="1818" y="452" width="9" height="1.7" fill="#a6e2ff"/><rect x="1827" y="452" width="1" height="1.7" fill="#d8d8d8"/><rect x="1829" y="452" width="10" height="1.7" fill="#d99a7e"/><rect x="1814" y="454" width="1" height="1.7" fill="#d8d8d8"/><rect x="1810" y="456" width="1" height="1.7" fill="#d8d8d8"/><rect x="1811" y="456" width="1" height="1.7" fill="#d8d8d8"/><rect x="1810" y="458" width="1" height="1.7" fill="#d8d8d8"/><rect x="1814" y="460" width="6" height="1.7" fill="#a6e2ff"/><rect x="1820" y="460" width="1" height="1.7" fill="#d8d8d8"/><rect x="1822" y="460" width="35" height="1.7" fill="#d99a7e"/><rect x="1857" y="460" width="1" height="1.7" fill="#d8d8d8"/><rect x="1814" y="462" width="7" height="1.7" fill="#a6e2ff"/><rect x="1821" y="462" width="1" height="1.7" fill="#d8d8d8"/><rect x="1823" y="462" width="1" height="1.7" fill="#d8d8d8"/><rect x="1818" y="464" width="12" height="1.7" fill="#a6e2ff"/><rect x="1830" y="464" width="1" height="1.7" fill="#d8d8d8"/><rect x="1832" y="464" width="23" height="1.7" fill="#d99a7e"/><rect x="1814" y="466" width="1" height="1.7" fill="#d8d8d8"/><rect x="1810" y="468" width="1" height="1.7" fill="#d8d8d8"/><rect x="1806" y="470" width="1" height="1.7" fill="#d8d8d8"/><rect x="1807" y="470" width="1" height="1.7" fill="#d8d8d8"/><rect x="1806" y="472" width="10" height="1.7" fill="#a6e2ff"/><rect x="1816" y="472" width="1" height="1.7" fill="#d8d8d8"/><rect x="1818" y="472" width="1" height="1.7" fill="#d8d8d8"/><rect x="1810" y="474" width="1" height="1.7" fill="#d8d8d8"/><rect x="1814" y="476" width="8" height="1.7" fill="#a6e2ff"/><rect x="1822" y="476" width="1" height="1.7" fill="#d8d8d8"/><rect x="1824" y="476" width="29" height="1.7" fill="#d99a7e"/><rect x="1810" y="478" width="1" height="1.7" fill="#d8d8d8"/><rect x="1806" y="480" width="1" height="1.7" fill="#d8d8d8"/><rect x="1807" y="480" width="1" height="1.7" fill="#d8d8d8"/><rect x="1806" y="482" width="13" height="1.7" fill="#a6e2ff"/><rect x="1819" y="482" width="1" height="1.7" fill="#d8d8d8"/><rect x="1821" y="482" width="1" height="1.7" fill="#d8d8d8"/><rect x="1822" y="482" width="1" height="1.7" fill="#d8d8d8"/><rect x="1802" y="484" width="1" height="1.7" fill="#d8d8d8"/><rect x="1803" y="484" width="1" height="1.7" fill="#d8d8d8"/><rect x="1802" y="486" width="1" height="1.7" fill="#d8d8d8"/><rect x="1806" y="488" width="6" height="1.7" fill="#a6e2ff"/><rect x="1812" y="488" width="1" height="1.7" fill="#d8d8d8"/><rect x="1814" y="488" width="20" height="1.7" fill="#d99a7e"/><rect x="1834" y="488" width="1" height="1.7" fill="#d8d8d8"/><rect x="1806" y="490" width="13" height="1.7" fill="#a6e2ff"/><rect x="1819" y="490" width="1" height="1.7" fill="#d8d8d8"/><rect x="1821" y="490" width="63" height="1.7" fill="#d99a7e"/><rect x="1884" y="490" width="1" height="1.7" fill="#d8d8d8"/><rect x="1806" y="492" width="6" height="1.7" fill="#a6e2ff"/><rect x="1812" y="492" width="1" height="1.7" fill="#d8d8d8"/><rect x="1814" y="492" width="7" height="1.7" fill="#d99a7e"/><rect x="1821" y="492" width="1" height="1.7" fill="#d8d8d8"/><rect x="1806" y="494" width="11" height="1.7" fill="#a6e2ff"/><rect x="1817" y="494" width="1" height="1.7" fill="#d8d8d8"/><rect x="1819" y="494" width="8" height="1.7" fill="#d99a7e"/><rect x="1827" y="494" width="1" height="1.7" fill="#d8d8d8"/><rect x="1806" y="496" width="7" height="1.7" fill="#a6e2ff"/><rect x="1813" y="496" width="1" height="1.7" fill="#d8d8d8"/><rect x="1815" y="496" width="1" height="1.7" fill="#d8d8d8"/><rect x="1810" y="498" width="1" height="1.7" fill="#d8d8d8"/><rect x="1814" y="500" width="6" height="1.7" fill="#a6e2ff"/><rect x="1820" y="500" width="1" height="1.7" fill="#d8d8d8"/><rect x="1822" y="500" width="31" height="1.7" fill="#d99a7e"/><rect x="1853" y="500" width="1" height="1.7" fill="#d8d8d8"/><rect x="1814" y="502" width="7" height="1.7" fill="#a6e2ff"/><rect x="1821" y="502" width="1" height="1.7" fill="#d8d8d8"/><rect x="1823" y="502" width="1" height="1.7" fill="#d8d8d8"/><rect x="1818" y="504" width="9" height="1.7" fill="#a6e2ff"/><rect x="1827" y="504" width="1" height="1.7" fill="#d8d8d8"/><rect x="1829" y="504" width="11" height="1.7" fill="#d99a7e"/><rect x="1814" y="506" width="1" height="1.7" fill="#d8d8d8"/><rect x="1810" y="508" width="1" height="1.7" fill="#d8d8d8"/><rect x="1806" y="510" width="1" height="1.7" fill="#d8d8d8"/><rect x="1807" y="510" width="1" height="1.7" fill="#d8d8d8"/><rect x="1806" y="512" width="10" height="1.7" fill="#a6e2ff"/><rect x="1816" y="512" width="1" height="1.7" fill="#d8d8d8"/><rect x="1818" y="512" width="1" height="1.7" fill="#d8d8d8"/><rect x="1810" y="514" width="1" height="1.7" fill="#d8d8d8"/><rect x="1814" y="516" width="8" height="1.7" fill="#a6e2ff"/><rect x="1822" y="516" width="1" height="1.7" fill="#d8d8d8"/><rect x="1824" y="516" width="19" height="1.7" fill="#d99a7e"/><rect x="1810" y="518" width="1" height="1.7" fill="#d8d8d8"/><rect x="1806" y="520" width="1" height="1.7" fill="#d8d8d8"/><rect x="1807" y="520" width="1" height="1.7" fill="#d8d8d8"/><rect x="1806" y="522" width="13" height="1.7" fill="#a6e2ff"/><rect x="1819" y="522" width="1" height="1.7" fill="#d8d8d8"/><rect x="1821" y="522" width="1" height="1.7" fill="#d8d8d8"/><rect x="1810" y="524" width="1" height="1.7" fill="#d8d8d8"/><rect x="1814" y="526" width="11" height="1.7" fill="#a6e2ff"/><rect x="1825" y="526" width="1" height="1.7" fill="#d8d8d8"/><rect x="1827" y="526" width="21" height="1.7" fill="#d99a7e"/><rect x="1848" y="526" width="1" height="1.7" fill="#d8d8d8"/><rect x="1814" y="528" width="9" height="1.7" fill="#a6e2ff"/><rect x="1823" y="528" width="1" height="1.7" fill="#d8d8d8"/><rect x="1825" y="528" width="1" height="1.7" fill="#d8d8d8"/><rect x="1818" y="530" width="1" height="1.7" fill="#d8d8d8"/><rect x="1822" y="532" width="7" height="1.7" fill="#a6e2ff"/><rect x="1829" y="532" width="1" height="1.7" fill="#d8d8d8"/><rect x="1831" y="532" width="17" height="1.7" fill="#d99a7e"/><rect x="1848" y="532" width="1" height="1.7" fill="#d8d8d8"/><rect x="1822" y="534" width="6" height="1.7" fill="#a6e2ff"/><rect x="1828" y="534" width="1" height="1.7" fill="#d8d8d8"/><rect x="1830" y="534" width="9" height="1.7" fill="#d99a7e"/><rect x="1839" y="534" width="1" height="1.7" fill="#d8d8d8"/><rect x="1822" y="536" width="9" height="1.7" fill="#a6e2ff"/><rect x="1831" y="536" width="1" height="1.7" fill="#d8d8d8"/><rect x="1833" y="536" width="1" height="1.7" fill="#d8d8d8"/><rect x="1826" y="538" width="13" height="1.7" fill="#d99a7e"/><rect x="1822" y="540" width="1" height="1.7" fill="#d8d8d8"/><rect x="1823" y="540" width="1" height="1.7" fill="#d8d8d8"/><rect x="1822" y="542" width="9" height="1.7" fill="#a6e2ff"/><rect x="1831" y="542" width="1" height="1.7" fill="#d8d8d8"/><rect x="1833" y="542" width="5" height="1.7" fill="#5aa1dc"/><rect x="1818" y="544" width="1" height="1.7" fill="#d8d8d8"/><rect x="1814" y="546" width="1" height="1.7" fill="#d8d8d8"/><rect x="1815" y="546" width="1" height="1.7" fill="#d8d8d8"/><rect x="1814" y="548" width="12" height="1.7" fill="#a6e2ff"/><rect x="1826" y="548" width="1" height="1.7" fill="#d8d8d8"/><rect x="1828" y="548" width="1" height="1.7" fill="#d8d8d8"/><rect x="1829" y="548" width="1" height="1.7" fill="#d8d8d8"/><rect x="1810" y="550" width="1" height="1.7" fill="#d8d8d8"/><rect x="1806" y="552" width="1" height="1.7" fill="#d8d8d8"/><rect x="1802" y="554" width="1" height="1.7" fill="#d8d8d8"/><rect x="1803" y="554" width="1" height="1.7" fill="#d8d8d8"/><rect x="1802" y="556" width="1" height="1.7" fill="#d8d8d8"/><rect x="1806" y="558" width="6" height="1.7" fill="#a6e2ff"/><rect x="1812" y="558" width="1" height="1.7" fill="#d8d8d8"/><rect x="1814" y="558" width="23" height="1.7" fill="#d99a7e"/><rect x="1837" y="558" width="1" height="1.7" fill="#d8d8d8"/><rect x="1806" y="560" width="13" height="1.7" fill="#a6e2ff"/><rect x="1819" y="560" width="1" height="1.7" fill="#d8d8d8"/><rect x="1821" y="560" width="40" height="1.7" fill="#d99a7e"/><rect x="1861" y="560" width="1" height="1.7" fill="#d8d8d8"/><rect x="1806" y="562" width="6" height="1.7" fill="#a6e2ff"/><rect x="1812" y="562" width="1" height="1.7" fill="#d8d8d8"/><rect x="1814" y="562" width="7" height="1.7" fill="#d99a7e"/><rect x="1821" y="562" width="1" height="1.7" fill="#d8d8d8"/><rect x="1806" y="564" width="11" height="1.7" fill="#a6e2ff"/><rect x="1817" y="564" width="1" height="1.7" fill="#d8d8d8"/><rect x="1819" y="564" width="8" height="1.7" fill="#d99a7e"/><rect x="1827" y="564" width="1" height="1.7" fill="#d8d8d8"/><rect x="1806" y="566" width="7" height="1.7" fill="#a6e2ff"/><rect x="1813" y="566" width="1" height="1.7" fill="#d8d8d8"/><rect x="1815" y="566" width="1" height="1.7" fill="#d8d8d8"/><rect x="1810" y="568" width="1" height="1.7" fill="#d8d8d8"/><rect x="1814" y="570" width="6" height="1.7" fill="#a6e2ff"/><rect x="1820" y="570" width="1" height="1.7" fill="#d8d8d8"/><rect x="1822" y="570" width="57" height="1.7" fill="#d99a7e"/><rect x="1879" y="570" width="1" height="1.7" fill="#d8d8d8"/><rect x="1814" y="572" width="7" height="1.7" fill="#a6e2ff"/><rect x="1821" y="572" width="1" height="1.7" fill="#d8d8d8"/><rect x="1823" y="572" width="1" height="1.7" fill="#d8d8d8"/><rect x="1818" y="574" width="8" height="1.7" fill="#a6e2ff"/><rect x="1826" y="574" width="1" height="1.7" fill="#d8d8d8"/><rect x="1828" y="574" width="1" height="1.7" fill="#d8d8d8"/><rect x="1822" y="576" width="11" height="1.7" fill="#d99a7e"/><rect x="1833" y="576" width="1" height="1.7" fill="#d8d8d8"/><rect x="1822" y="578" width="11" height="1.7" fill="#d99a7e"/><rect x="1833" y="578" width="1" height="1.7" fill="#d8d8d8"/><rect x="1822" y="580" width="11" height="1.7" fill="#d99a7e"/><rect x="1833" y="580" width="1" height="1.7" fill="#d8d8d8"/><rect x="1822" y="582" width="11" height="1.7" fill="#d99a7e"/><rect x="1818" y="584" width="1" height="1.7" fill="#d8d8d8"/><rect x="1819" y="584" width="1" height="1.7" fill="#d8d8d8"/><rect x="1818" y="586" width="12" height="1.7" fill="#a6e2ff"/><rect x="1830" y="586" width="1" height="1.7" fill="#d8d8d8"/><rect x="1832" y="586" width="15" height="1.7" fill="#d99a7e"/><rect x="1814" y="588" width="1" height="1.7" fill="#d8d8d8"/><rect x="1810" y="590" width="1" height="1.7" fill="#d8d8d8"/><rect x="1806" y="592" width="1" height="1.7" fill="#d8d8d8"/><rect x="1807" y="592" width="1" height="1.7" fill="#d8d8d8"/><rect x="1806" y="594" width="10" height="1.7" fill="#a6e2ff"/><rect x="1816" y="594" width="1" height="1.7" fill="#d8d8d8"/><rect x="1818" y="594" width="1" height="1.7" fill="#d8d8d8"/><rect x="1810" y="596" width="1" height="1.7" fill="#d8d8d8"/><rect x="1814" y="598" width="8" height="1.7" fill="#a6e2ff"/><rect x="1822" y="598" width="1" height="1.7" fill="#d8d8d8"/><rect x="1824" y="598" width="29" height="1.7" fill="#d99a7e"/><rect x="1810" y="600" width="1" height="1.7" fill="#d8d8d8"/><rect x="1811" y="600" width="1" height="1.7" fill="#d8d8d8"/><rect x="1810" y="602" width="1" height="1.7" fill="#d8d8d8"/><rect x="1814" y="604" width="8" height="1.7" fill="#a6e2ff"/><rect x="1822" y="604" width="1" height="1.7" fill="#d8d8d8"/><rect x="1824" y="604" width="8" height="1.7" fill="#d99a7e"/><rect x="1810" y="606" width="1" height="1.7" fill="#d8d8d8"/><rect x="1811" y="606" width="1" height="1.7" fill="#d8d8d8"/><rect x="1810" y="608" width="1" height="1.7" fill="#d8d8d8"/><rect x="1814" y="610" width="8" height="1.7" fill="#a6e2ff"/><rect x="1822" y="610" width="1" height="1.7" fill="#d8d8d8"/><rect x="1824" y="610" width="11" height="1.7" fill="#d99a7e"/><rect x="1810" y="612" width="1" height="1.7" fill="#d8d8d8"/><rect x="1806" y="614" width="1" height="1.7" fill="#d8d8d8"/><rect x="1807" y="614" width="1" height="1.7" fill="#d8d8d8"/><rect x="1806" y="616" width="13" height="1.7" fill="#a6e2ff"/><rect x="1819" y="616" width="1" height="1.7" fill="#d8d8d8"/><rect x="1821" y="616" width="1" height="1.7" fill="#d8d8d8"/><rect x="1822" y="616" width="1" height="1.7" fill="#d8d8d8"/><rect x="1802" y="618" width="1" height="1.7" fill="#d8d8d8"/><rect x="1803" y="618" width="1" height="1.7" fill="#d8d8d8"/><rect x="1802" y="620" width="1" height="1.7" fill="#d8d8d8"/><rect x="1806" y="622" width="6" height="1.7" fill="#a6e2ff"/><rect x="1812" y="622" width="1" height="1.7" fill="#d8d8d8"/><rect x="1814" y="622" width="15" height="1.7" fill="#d99a7e"/><rect x="1829" y="622" width="1" height="1.7" fill="#d8d8d8"/><rect x="1806" y="624" width="13" height="1.7" fill="#a6e2ff"/><rect x="1819" y="624" width="1" height="1.7" fill="#d8d8d8"/><rect x="1821" y="624" width="17" height="1.7" fill="#d99a7e"/><rect x="1838" y="624" width="1" height="1.7" fill="#d8d8d8"/><rect x="1806" y="626" width="6" height="1.7" fill="#a6e2ff"/><rect x="1812" y="626" width="1" height="1.7" fill="#d8d8d8"/><rect x="1814" y="626" width="7" height="1.7" fill="#d99a7e"/><rect x="1821" y="626" width="1" height="1.7" fill="#d8d8d8"/><rect x="1806" y="628" width="11" height="1.7" fill="#a6e2ff"/><rect x="1817" y="628" width="1" height="1.7" fill="#d8d8d8"/><rect x="1819" y="628" width="8" height="1.7" fill="#d99a7e"/><rect x="1827" y="628" width="1" height="1.7" fill="#d8d8d8"/><rect x="1806" y="630" width="7" height="1.7" fill="#a6e2ff"/><rect x="1813" y="630" width="1" height="1.7" fill="#d8d8d8"/><rect x="1815" y="630" width="1" height="1.7" fill="#d8d8d8"/><rect x="1810" y="632" width="1" height="1.7" fill="#d8d8d8"/><rect x="1814" y="634" width="6" height="1.7" fill="#a6e2ff"/><rect x="1820" y="634" width="1" height="1.7" fill="#d8d8d8"/><rect x="1822" y="634" width="31" height="1.7" fill="#d99a7e"/><rect x="1853" y="634" width="1" height="1.7" fill="#d8d8d8"/><rect x="1814" y="636" width="7" height="1.7" fill="#a6e2ff"/><rect x="1821" y="636" width="1" height="1.7" fill="#d8d8d8"/><rect x="1823" y="636" width="1" height="1.7" fill="#d8d8d8"/><rect x="1818" y="638" width="9" height="1.7" fill="#a6e2ff"/><rect x="1827" y="638" width="1" height="1.7" fill="#d8d8d8"/><rect x="1829" y="638" width="10" height="1.7" fill="#d99a7e"/><rect x="1814" y="640" width="1" height="1.7" fill="#d8d8d8"/><rect x="1810" y="642" width="1" height="1.7" fill="#d8d8d8"/><rect x="1806" y="644" width="1" height="1.7" fill="#d8d8d8"/><rect x="1807" y="644" width="1" height="1.7" fill="#d8d8d8"/><rect x="1806" y="646" width="10" height="1.7" fill="#a6e2ff"/><rect x="1816" y="646" width="1" height="1.7" fill="#d8d8d8"/><rect x="1818" y="646" width="1" height="1.7" fill="#d8d8d8"/><rect x="1810" y="648" width="1" height="1.7" fill="#d8d8d8"/><rect x="1814" y="650" width="8" height="1.7" fill="#a6e2ff"/><rect x="1822" y="650" width="1" height="1.7" fill="#d8d8d8"/><rect x="1824" y="650" width="29" height="1.7" fill="#d99a7e"/><rect x="1810" y="652" width="1" height="1.7" fill="#d8d8d8"/><rect x="1811" y="652" width="1" height="1.7" fill="#d8d8d8"/><rect x="1810" y="654" width="1" height="1.7" fill="#d8d8d8"/><rect x="1814" y="656" width="8" height="1.7" fill="#a6e2ff"/><rect x="1822" y="656" width="1" height="1.7" fill="#d8d8d8"/><rect x="1824" y="656" width="8" height="1.7" fill="#d99a7e"/><rect x="1810" y="658" width="1" height="1.7" fill="#d8d8d8"/><rect x="1811" y="658" width="1" height="1.7" fill="#d8d8d8"/><rect x="1810" y="660" width="1" height="1.7" fill="#d8d8d8"/><rect x="1814" y="662" width="8" height="1.7" fill="#a6e2ff"/><rect x="1822" y="662" width="1" height="1.7" fill="#d8d8d8"/><rect x="1824" y="662" width="11" height="1.7" fill="#d99a7e"/><rect x="1810" y="664" width="1" height="1.7" fill="#d8d8d8"/><rect x="1806" y="666" width="1" height="1.7" fill="#d8d8d8"/><rect x="1807" y="666" width="1" height="1.7" fill="#d8d8d8"/><rect x="1806" y="668" width="13" height="1.7" fill="#a6e2ff"/><rect x="1819" y="668" width="1" height="1.7" fill="#d8d8d8"/><rect x="1821" y="668" width="1" height="1.7" fill="#d8d8d8"/><rect x="1822" y="668" width="1" height="1.7" fill="#d8d8d8"/><rect x="1802" y="670" width="1" height="1.7" fill="#d8d8d8"/><rect x="1803" y="670" width="1" height="1.7" fill="#d8d8d8"/><rect x="1802" y="672" width="1" height="1.7" fill="#d8d8d8"/><rect x="1806" y="674" width="6" height="1.7" fill="#a6e2ff"/><rect x="1812" y="674" width="1" height="1.7" fill="#d8d8d8"/><rect x="1814" y="674" width="12" height="1.7" fill="#d99a7e"/><rect x="1826" y="674" width="1" height="1.7" fill="#d8d8d8"/><rect x="1806" y="676" width="13" height="1.7" fill="#a6e2ff"/><rect x="1819" y="676" width="1" height="1.7" fill="#d8d8d8"/><rect x="1821" y="676" width="30" height="1.7" fill="#d99a7e"/><rect x="1851" y="676" width="1" height="1.7" fill="#d8d8d8"/><rect x="1806" y="678" width="6" height="1.7" fill="#a6e2ff"/><rect x="1812" y="678" width="1" height="1.7" fill="#d8d8d8"/><rect x="1814" y="678" width="7" height="1.7" fill="#d99a7e"/><rect x="1821" y="678" width="1" height="1.7" fill="#d8d8d8"/><rect x="1806" y="680" width="9" height="1.7" fill="#a6e2ff"/><rect x="1815" y="680" width="1" height="1.7" fill="#d8d8d8"/><rect x="1817" y="680" width="4" height="1.7" fill="#d99a7e"/><rect x="1821" y="680" width="1" height="1.7" fill="#d8d8d8"/><rect x="1806" y="682" width="11" height="1.7" fill="#a6e2ff"/><rect x="1817" y="682" width="1" height="1.7" fill="#d8d8d8"/><rect x="1819" y="682" width="8" height="1.7" fill="#d99a7e"/><rect x="1827" y="682" width="1" height="1.7" fill="#d8d8d8"/><rect x="1806" y="684" width="7" height="1.7" fill="#a6e2ff"/><rect x="1813" y="684" width="1" height="1.7" fill="#d8d8d8"/><rect x="1815" y="684" width="1" height="1.7" fill="#d8d8d8"/><rect x="1810" y="686" width="1" height="1.7" fill="#d8d8d8"/><rect x="1814" y="688" width="6" height="1.7" fill="#a6e2ff"/><rect x="1820" y="688" width="1" height="1.7" fill="#d8d8d8"/><rect x="1822" y="688" width="52" height="1.7" fill="#d99a7e"/><rect x="1874" y="688" width="1" height="1.7" fill="#d8d8d8"/><rect x="1814" y="690" width="7" height="1.7" fill="#a6e2ff"/><rect x="1821" y="690" width="1" height="1.7" fill="#d8d8d8"/><rect x="1823" y="690" width="1" height="1.7" fill="#d8d8d8"/><rect x="1818" y="692" width="14" height="1.7" fill="#a6e2ff"/><rect x="1832" y="692" width="1" height="1.7" fill="#d8d8d8"/><rect x="1834" y="692" width="10" height="1.7" fill="#d99a7e"/><rect x="1814" y="694" width="1" height="1.7" fill="#d8d8d8"/><rect x="1810" y="696" width="1" height="1.7" fill="#d8d8d8"/><rect x="1811" y="696" width="1" height="1.7" fill="#d8d8d8"/><rect x="1810" y="698" width="1" height="1.7" fill="#d8d8d8"/><rect x="1814" y="700" width="6" height="1.7" fill="#a6e2ff"/><rect x="1820" y="700" width="1" height="1.7" fill="#d8d8d8"/><rect x="1822" y="700" width="29" height="1.7" fill="#d99a7e"/><rect x="1851" y="700" width="1" height="1.7" fill="#d8d8d8"/><rect x="1814" y="702" width="7" height="1.7" fill="#a6e2ff"/><rect x="1821" y="702" width="1" height="1.7" fill="#d8d8d8"/><rect x="1823" y="702" width="1" height="1.7" fill="#d8d8d8"/><rect x="1818" y="704" width="12" height="1.7" fill="#a6e2ff"/><rect x="1830" y="704" width="1" height="1.7" fill="#d8d8d8"/><rect x="1832" y="704" width="12" height="1.7" fill="#d99a7e"/><rect x="1814" y="706" width="1" height="1.7" fill="#d8d8d8"/><rect x="1810" y="708" width="1" height="1.7" fill="#d8d8d8"/><rect x="1806" y="710" width="1" height="1.7" fill="#d8d8d8"/><rect x="1807" y="710" width="1" height="1.7" fill="#d8d8d8"/><rect x="1806" y="712" width="10" height="1.7" fill="#a6e2ff"/><rect x="1816" y="712" width="1" height="1.7" fill="#d8d8d8"/><rect x="1818" y="712" width="1" height="1.7" fill="#d8d8d8"/><rect x="1810" y="714" width="1" height="1.7" fill="#d8d8d8"/><rect x="1814" y="716" width="8" height="1.7" fill="#a6e2ff"/><rect x="1822" y="716" width="1" height="1.7" fill="#d8d8d8"/><rect x="1824" y="716" width="8" height="1.7" fill="#d99a7e"/><rect x="1810" y="718" width="1" height="1.7" fill="#d8d8d8"/><rect x="1806" y="720" width="1" height="1.7" fill="#d8d8d8"/><rect x="1807" y="720" width="1" height="1.7" fill="#d8d8d8"/><rect x="1806" y="722" width="13" height="1.7" fill="#a6e2ff"/><rect x="1819" y="722" width="1" height="1.7" fill="#d8d8d8"/><rect x="1821" y="722" width="1" height="1.7" fill="#d8d8d8"/><rect x="1810" y="724" width="1" height="1.7" fill="#d8d8d8"/><rect x="1814" y="726" width="9" height="1.7" fill="#a6e2ff"/><rect x="1823" y="726" width="1" height="1.7" fill="#d8d8d8"/><rect x="1825" y="726" width="1" height="1.7" fill="#d8d8d8"/><rect x="1818" y="728" width="1" height="1.7" fill="#d8d8d8"/><rect x="1822" y="730" width="7" height="1.7" fill="#a6e2ff"/><rect x="1829" y="730" width="1" height="1.7" fill="#d8d8d8"/><rect x="1831" y="730" width="9" height="1.7" fill="#d99a7e"/><rect x="1840" y="730" width="1" height="1.7" fill="#d8d8d8"/><rect x="1822" y="732" width="6" height="1.7" fill="#a6e2ff"/><rect x="1828" y="732" width="1" height="1.7" fill="#d8d8d8"/><rect x="1830" y="732" width="12" height="1.7" fill="#d99a7e"/><rect x="1842" y="732" width="1" height="1.7" fill="#d8d8d8"/><rect x="1822" y="734" width="9" height="1.7" fill="#a6e2ff"/><rect x="1831" y="734" width="1" height="1.7" fill="#d8d8d8"/><rect x="1833" y="734" width="1" height="1.7" fill="#d8d8d8"/><rect x="1826" y="736" width="14" height="1.7" fill="#d99a7e"/><rect x="1840" y="736" width="1" height="1.7" fill="#d8d8d8"/><rect x="1826" y="738" width="13" height="1.7" fill="#d99a7e"/><rect x="1822" y="740" width="1" height="1.7" fill="#d8d8d8"/><rect x="1823" y="740" width="1" height="1.7" fill="#d8d8d8"/><rect x="1822" y="742" width="9" height="1.7" fill="#a6e2ff"/><rect x="1831" y="742" width="1" height="1.7" fill="#d8d8d8"/><rect x="1833" y="742" width="5" height="1.7" fill="#5aa1dc"/><rect x="1818" y="744" width="1" height="1.7" fill="#d8d8d8"/><rect x="1814" y="746" width="1" height="1.7" fill="#d8d8d8"/><rect x="1815" y="746" width="1" height="1.7" fill="#d8d8d8"/><rect x="1814" y="748" width="12" height="1.7" fill="#a6e2ff"/><rect x="1826" y="748" width="1" height="1.7" fill="#d8d8d8"/><rect x="1828" y="748" width="1" height="1.7" fill="#d8d8d8"/><rect x="1818" y="750" width="1" height="1.7" fill="#d8d8d8"/><rect x="1822" y="752" width="6" height="1.7" fill="#a6e2ff"/><rect x="1828" y="752" width="1" height="1.7" fill="#d8d8d8"/><rect x="1830" y="752" width="17" height="1.7" fill="#d99a7e"/><rect x="1847" y="752" width="1" height="1.7" fill="#d8d8d8"/><rect x="1822" y="754" width="7" height="1.7" fill="#a6e2ff"/><rect x="1829" y="754" width="1" height="1.7" fill="#d8d8d8"/><rect x="1831" y="754" width="16" height="1.7" fill="#d99a7e"/><rect x="1847" y="754" width="1" height="1.7" fill="#d8d8d8"/><rect x="1822" y="756" width="6" height="1.7" fill="#a6e2ff"/><rect x="1828" y="756" width="1" height="1.7" fill="#d8d8d8"/><rect x="1830" y="756" width="8" height="1.7" fill="#d99a7e"/><rect x="1838" y="756" width="1" height="1.7" fill="#d8d8d8"/><rect x="1822" y="758" width="10" height="1.7" fill="#a6e2ff"/><rect x="1832" y="758" width="1" height="1.7" fill="#d8d8d8"/><rect x="1834" y="758" width="15" height="1.7" fill="#d99a7e"/><rect x="1849" y="758" width="1" height="1.7" fill="#d8d8d8"/><rect x="1822" y="760" width="12" height="1.7" fill="#a6e2ff"/><rect x="1834" y="760" width="1" height="1.7" fill="#d8d8d8"/><rect x="1836" y="760" width="4" height="1.7" fill="#5aa1dc"/><rect x="1818" y="762" width="1" height="1.7" fill="#d8d8d8"/><rect x="1814" y="764" width="1" height="1.7" fill="#d8d8d8"/><rect x="1810" y="766" width="1" height="1.7" fill="#d8d8d8"/><rect x="1806" y="768" width="1" height="1.7" fill="#d8d8d8"/><rect x="1802" y="770" width="1" height="1.7" fill="#d8d8d8"/><rect x="1803" y="770" width="1" height="1.7" fill="#d8d8d8"/><rect x="1802" y="772" width="1" height="1.7" fill="#d8d8d8"/><rect x="1806" y="774" width="6" height="1.7" fill="#a6e2ff"/><rect x="1812" y="774" width="1" height="1.7" fill="#d8d8d8"/><rect x="1814" y="774" width="13" height="1.7" fill="#d99a7e"/><rect x="1827" y="774" width="1" height="1.7" fill="#d8d8d8"/><rect x="1806" y="776" width="6" height="1.7" fill="#a6e2ff"/><rect x="1812" y="776" width="1" height="1.7" fill="#d8d8d8"/><rect x="1814" y="776" width="7" height="1.7" fill="#d99a7e"/><rect x="1821" y="776" width="1" height="1.7" fill="#d8d8d8"/><rect x="1806" y="778" width="9" height="1.7" fill="#a6e2ff"/><rect x="1815" y="778" width="1" height="1.7" fill="#d8d8d8"/><rect x="1817" y="778" width="4" height="1.7" fill="#d99a7e"/><rect x="1821" y="778" width="1" height="1.7" fill="#d8d8d8"/><rect x="1806" y="780" width="11" height="1.7" fill="#a6e2ff"/><rect x="1817" y="780" width="1" height="1.7" fill="#d8d8d8"/><rect x="1819" y="780" width="8" height="1.7" fill="#d99a7e"/><rect x="1827" y="780" width="1" height="1.7" fill="#d8d8d8"/><rect x="1806" y="782" width="7" height="1.7" fill="#a6e2ff"/><rect x="1813" y="782" width="1" height="1.7" fill="#d8d8d8"/><rect x="1815" y="782" width="1" height="1.7" fill="#d8d8d8"/><rect x="1810" y="784" width="1" height="1.7" fill="#d8d8d8"/><rect x="1814" y="786" width="6" height="1.7" fill="#a6e2ff"/><rect x="1820" y="786" width="1" height="1.7" fill="#d8d8d8"/><rect x="1822" y="786" width="31" height="1.7" fill="#d99a7e"/><rect x="1853" y="786" width="1" height="1.7" fill="#d8d8d8"/><rect x="1814" y="788" width="7" height="1.7" fill="#a6e2ff"/><rect x="1821" y="788" width="1" height="1.7" fill="#d8d8d8"/><rect x="1823" y="788" width="1" height="1.7" fill="#d8d8d8"/><rect x="1818" y="790" width="9" height="1.7" fill="#a6e2ff"/><rect x="1827" y="790" width="1" height="1.7" fill="#d8d8d8"/><rect x="1829" y="790" width="8" height="1.7" fill="#d99a7e"/><rect x="1814" y="792" width="1" height="1.7" fill="#d8d8d8"/><rect x="1810" y="794" width="1" height="1.7" fill="#d8d8d8"/><rect x="1811" y="794" width="1" height="1.7" fill="#d8d8d8"/><rect x="1810" y="796" width="1" height="1.7" fill="#d8d8d8"/><rect x="1814" y="798" width="6" height="1.7" fill="#a6e2ff"/><rect x="1820" y="798" width="1" height="1.7" fill="#d8d8d8"/><rect x="1822" y="798" width="50" height="1.7" fill="#d99a7e"/><rect x="1872" y="798" width="1" height="1.7" fill="#d8d8d8"/><rect x="1814" y="800" width="7" height="1.7" fill="#a6e2ff"/><rect x="1821" y="800" width="1" height="1.7" fill="#d8d8d8"/><rect x="1823" y="800" width="1" height="1.7" fill="#d8d8d8"/><rect x="1818" y="802" width="12" height="1.7" fill="#a6e2ff"/><rect x="1830" y="802" width="1" height="1.7" fill="#d8d8d8"/><rect x="1832" y="802" width="12" height="1.7" fill="#d99a7e"/><rect x="1814" y="804" width="1" height="1.7" fill="#d8d8d8"/><rect x="1810" y="806" width="1" height="1.7" fill="#d8d8d8"/><rect x="1806" y="808" width="1" height="1.7" fill="#d8d8d8"/><rect x="1807" y="808" width="1" height="1.7" fill="#d8d8d8"/><rect x="1806" y="810" width="10" height="1.7" fill="#a6e2ff"/><rect x="1816" y="810" width="1" height="1.7" fill="#d8d8d8"/><rect x="1818" y="810" width="1" height="1.7" fill="#d8d8d8"/><rect x="1810" y="812" width="1" height="1.7" fill="#d8d8d8"/><rect x="1814" y="814" width="8" height="1.7" fill="#a6e2ff"/><rect x="1822" y="814" width="1" height="1.7" fill="#d8d8d8"/><rect x="1824" y="814" width="8" height="1.7" fill="#d99a7e"/><rect x="1810" y="816" width="1" height="1.7" fill="#d8d8d8"/><rect x="1806" y="818" width="1" height="1.7" fill="#d8d8d8"/><rect x="1807" y="818" width="1" height="1.7" fill="#d8d8d8"/><rect x="1806" y="820" width="13" height="1.7" fill="#a6e2ff"/><rect x="1819" y="820" width="1" height="1.7" fill="#d8d8d8"/><rect x="1821" y="820" width="1" height="1.7" fill="#d8d8d8"/><rect x="1822" y="820" width="1" height="1.7" fill="#d8d8d8"/><rect x="1802" y="822" width="1" height="1.7" fill="#d8d8d8"/><rect x="1803" y="822" width="1" height="1.7" fill="#d8d8d8"/><rect x="1802" y="824" width="1" height="1.7" fill="#d8d8d8"/><rect x="1806" y="826" width="6" height="1.7" fill="#a6e2ff"/><rect x="1812" y="826" width="1" height="1.7" fill="#d8d8d8"/><rect x="1814" y="826" width="12" height="1.7" fill="#d99a7e"/><rect x="1826" y="826" width="1" height="1.7" fill="#d8d8d8"/><rect x="1806" y="828" width="6" height="1.7" fill="#a6e2ff"/><rect x="1812" y="828" width="1" height="1.7" fill="#d8d8d8"/><rect x="1814" y="828" width="7" height="1.7" fill="#d99a7e"/><rect x="1821" y="828" width="1" height="1.7" fill="#d8d8d8"/><rect x="1806" y="830" width="11" height="1.7" fill="#a6e2ff"/><rect x="1817" y="830" width="1" height="1.7" fill="#d8d8d8"/><rect x="1819" y="830" width="8" height="1.7" fill="#d99a7e"/><rect x="1827" y="830" width="1" height="1.7" fill="#d8d8d8"/><rect x="1806" y="832" width="7" height="1.7" fill="#a6e2ff"/><rect x="1813" y="832" width="1" height="1.7" fill="#d8d8d8"/><rect x="1815" y="832" width="1" height="1.7" fill="#d8d8d8"/><rect x="1810" y="834" width="1" height="1.7" fill="#d8d8d8"/><rect x="1814" y="836" width="6" height="1.7" fill="#a6e2ff"/><rect x="1820" y="836" width="1" height="1.7" fill="#d8d8d8"/><rect x="1822" y="836" width="31" height="1.7" fill="#d99a7e"/><rect x="1853" y="836" width="1" height="1.7" fill="#d8d8d8"/><rect x="1814" y="838" width="7" height="1.7" fill="#a6e2ff"/><rect x="1821" y="838" width="1" height="1.7" fill="#d8d8d8"/><rect x="1823" y="838" width="1" height="1.7" fill="#d8d8d8"/><rect x="1818" y="840" width="9" height="1.7" fill="#a6e2ff"/><rect x="1827" y="840" width="1" height="1.7" fill="#d8d8d8"/><rect x="1829" y="840" width="8" height="1.7" fill="#d99a7e"/><rect x="1814" y="842" width="1" height="1.7" fill="#d8d8d8"/><rect x="1810" y="844" width="1" height="1.7" fill="#d8d8d8"/><rect x="1806" y="846" width="1" height="1.7" fill="#d8d8d8"/><rect x="1807" y="846" width="1" height="1.7" fill="#d8d8d8"/><rect x="1806" y="848" width="10" height="1.7" fill="#a6e2ff"/><rect x="1816" y="848" width="1" height="1.7" fill="#d8d8d8"/><rect x="1818" y="848" width="1" height="1.7" fill="#d8d8d8"/><rect x="1810" y="850" width="1" height="1.7" fill="#d8d8d8"/><rect x="1814" y="852" width="8" height="1.7" fill="#a6e2ff"/><rect x="1822" y="852" width="1" height="1.7" fill="#d8d8d8"/><rect x="1824" y="852" width="15" height="1.7" fill="#d99a7e"/><rect x="1810" y="854" width="1" height="1.7" fill="#d8d8d8"/><rect x="1806" y="856" width="1" height="1.7" fill="#d8d8d8"/><rect x="1807" y="856" width="1" height="1.7" fill="#d8d8d8"/><rect x="1806" y="858" width="13" height="1.7" fill="#a6e2ff"/><rect x="1819" y="858" width="1" height="1.7" fill="#d8d8d8"/><rect x="1821" y="858" width="1" height="1.7" fill="#d8d8d8"/><rect x="1822" y="858" width="1" height="1.7" fill="#d8d8d8"/><rect x="1798" y="974" width="10" height="1.7" fill="#a6e2ff"/><rect x="1808" y="974" width="1" height="1.7" fill="#d8d8d8"/><rect x="1810" y="974" width="1" height="1.7" fill="#d8d8d8"/><rect x="1802" y="976" width="1" height="1.7" fill="#d8d8d8"/><rect x="1806" y="978" width="6" height="1.7" fill="#a6e2ff"/><rect x="1812" y="978" width="1" height="1.7" fill="#d8d8d8"/><rect x="1814" y="978" width="9" height="1.7" fill="#d99a7e"/><rect x="1823" y="978" width="1" height="1.7" fill="#d8d8d8"/><rect x="1806" y="980" width="12" height="1.7" fill="#a6e2ff"/><rect x="1818" y="980" width="1" height="1.7" fill="#d8d8d8"/><rect x="1820" y="980" width="7" height="1.7" fill="#d99a7e"/><rect x="1827" y="980" width="1" height="1.7" fill="#d8d8d8"/><rect x="1806" y="982" width="10" height="1.7" fill="#a6e2ff"/><rect x="1816" y="982" width="1" height="1.7" fill="#d8d8d8"/><rect x="1818" y="982" width="9" height="1.7" fill="#d99a7e"/><rect x="1802" y="984" width="1" height="1.7" fill="#d8d8d8"/><rect x="1803" y="984" width="1" height="1.7" fill="#d8d8d8"/><rect x="1802" y="986" width="1" height="1.7" fill="#d8d8d8"/><rect x="1806" y="988" width="6" height="1.7" fill="#a6e2ff"/><rect x="1812" y="988" width="1" height="1.7" fill="#d8d8d8"/><rect x="1814" y="988" width="8" height="1.7" fill="#d99a7e"/><rect x="1822" y="988" width="1" height="1.7" fill="#d8d8d8"/><rect x="1806" y="990" width="12" height="1.7" fill="#a6e2ff"/><rect x="1818" y="990" width="1" height="1.7" fill="#d8d8d8"/><rect x="1820" y="990" width="7" height="1.7" fill="#d99a7e"/><rect x="1827" y="990" width="1" height="1.7" fill="#d8d8d8"/><rect x="1806" y="992" width="10" height="1.7" fill="#a6e2ff"/><rect x="1816" y="992" width="1" height="1.7" fill="#d8d8d8"/><rect x="1818" y="992" width="9" height="1.7" fill="#d99a7e"/><rect x="1802" y="994" width="1" height="1.7" fill="#d8d8d8"/><rect x="1803" y="994" width="1" height="1.7" fill="#d8d8d8"/><rect x="1802" y="996" width="1" height="1.7" fill="#d8d8d8"/><rect x="1806" y="998" width="6" height="1.7" fill="#a6e2ff"/><rect x="1812" y="998" width="1" height="1.7" fill="#d8d8d8"/><rect x="1814" y="998" width="8" height="1.7" fill="#d99a7e"/><rect x="1822" y="998" width="1" height="1.7" fill="#d8d8d8"/><rect x="1806" y="1000" width="12" height="1.7" fill="#a6e2ff"/><rect x="1818" y="1000" width="1" height="1.7" fill="#d8d8d8"/><rect x="1820" y="1000" width="7" height="1.7" fill="#d99a7e"/><rect x="1827" y="1000" width="1" height="1.7" fill="#d8d8d8"/><rect x="1806" y="1002" width="10" height="1.7" fill="#a6e2ff"/><rect x="1816" y="1002" width="1" height="1.7" fill="#d8d8d8"/><rect x="1818" y="1002" width="9" height="1.7" fill="#d99a7e"/><rect x="1802" y="1004" width="1" height="1.7" fill="#d8d8d8"/><rect x="1803" y="1004" width="1" height="1.7" fill="#d8d8d8"/><rect x="1802" y="1006" width="1" height="1.7" fill="#d8d8d8"/><rect x="1806" y="1008" width="6" height="1.7" fill="#a6e2ff"/><rect x="1812" y="1008" width="1" height="1.7" fill="#d8d8d8"/><rect x="1814" y="1008" width="11" height="1.7" fill="#d99a7e"/><rect x="1825" y="1008" width="1" height="1.7" fill="#d8d8d8"/><rect x="1806" y="1010" width="12" height="1.7" fill="#a6e2ff"/><rect x="1818" y="1010" width="1" height="1.7" fill="#d8d8d8"/><rect x="1820" y="1010" width="8" height="1.7" fill="#d99a7e"/><rect x="1828" y="1010" width="1" height="1.7" fill="#d8d8d8"/><rect x="1806" y="1012" width="10" height="1.7" fill="#a6e2ff"/><rect x="1816" y="1012" width="1" height="1.7" fill="#d8d8d8"/><rect x="1818" y="1012" width="6" height="1.7" fill="#d99a7e"/><rect x="1802" y="1014" width="1" height="1.7" fill="#d8d8d8"/><rect x="1803" y="1014" width="1" height="1.7" fill="#d8d8d8"/><rect x="1802" y="1016" width="1" height="1.7" fill="#d8d8d8"/><rect x="1806" y="1018" width="6" height="1.7" fill="#a6e2ff"/><rect x="1812" y="1018" width="1" height="1.7" fill="#d8d8d8"/><rect x="1814" y="1018" width="11" height="1.7" fill="#d99a7e"/><rect x="1825" y="1018" width="1" height="1.7" fill="#d8d8d8"/><rect x="1806" y="1020" width="12" height="1.7" fill="#a6e2ff"/><rect x="1818" y="1020" width="1" height="1.7" fill="#d8d8d8"/><rect x="1820" y="1020" width="7" height="1.7" fill="#d99a7e"/><rect x="1827" y="1020" width="1" height="1.7" fill="#d8d8d8"/><rect x="1806" y="1022" width="10" height="1.7" fill="#a6e2ff"/><rect x="1816" y="1022" width="1" height="1.7" fill="#d8d8d8"/><rect x="1818" y="1022" width="12" height="1.7" fill="#d99a7e"/><rect x="1802" y="1024" width="1" height="1.7" fill="#d8d8d8"/><rect x="1803" y="1024" width="1" height="1.7" fill="#d8d8d8"/><rect x="1802" y="1026" width="1" height="1.7" fill="#d8d8d8"/><rect x="1806" y="1028" width="6" height="1.7" fill="#a6e2ff"/><rect x="1812" y="1028" width="1" height="1.7" fill="#d8d8d8"/><rect x="1814" y="1028" width="30" height="1.7" fill="#d99a7e"/><rect x="1844" y="1028" width="1" height="1.7" fill="#d8d8d8"/><rect x="1806" y="1030" width="12" height="1.7" fill="#a6e2ff"/><rect x="1818" y="1030" width="1" height="1.7" fill="#d8d8d8"/><rect x="1820" y="1030" width="7" height="1.7" fill="#d99a7e"/><rect x="1827" y="1030" width="1" height="1.7" fill="#d8d8d8"/><rect x="1806" y="1032" width="10" height="1.7" fill="#a6e2ff"/><rect x="1816" y="1032" width="1" height="1.7" fill="#d8d8d8"/><rect x="1818" y="1032" width="9" height="1.7" fill="#d99a7e"/><rect x="1802" y="1034" width="1" height="1.7" fill="#d8d8d8"/><rect x="1803" y="1034" width="1" height="1.7" fill="#d8d8d8"/><rect x="1802" y="1036" width="1" height="1.7" fill="#d8d8d8"/><rect x="1806" y="1038" width="6" height="1.7" fill="#a6e2ff"/><rect x="1812" y="1038" width="1" height="1.7" fill="#d8d8d8"/><rect x="1814" y="1038" width="16" height="1.7" fill="#d99a7e"/><rect x="1830" y="1038" width="1" height="1.7" fill="#d8d8d8"/><rect x="1806" y="1040" width="12" height="1.7" fill="#a6e2ff"/><rect x="1818" y="1040" width="1" height="1.7" fill="#d8d8d8"/><rect x="1820" y="1040" width="7" height="1.7" fill="#d99a7e"/><rect x="1827" y="1040" width="1" height="1.7" fill="#d8d8d8"/><rect x="1806" y="1042" width="10" height="1.7" fill="#a6e2ff"/><rect x="1816" y="1042" width="1" height="1.7" fill="#d8d8d8"/><rect x="1818" y="1042" width="9" height="1.7" fill="#d99a7e"/><rect x="1802" y="1044" width="1" height="1.7" fill="#d8d8d8"/><rect x="1803" y="1044" width="1" height="1.7" fill="#d8d8d8"/><rect x="1802" y="1046" width="1" height="1.7" fill="#d8d8d8"/><rect x="1806" y="1048" width="6" height="1.7" fill="#a6e2ff"/><rect x="1812" y="1048" width="1" height="1.7" fill="#d8d8d8"/><rect x="1814" y="1048" width="17" height="1.7" fill="#d99a7e"/><rect x="1831" y="1048" width="1" height="1.7" fill="#d8d8d8"/><rect x="1806" y="1050" width="12" height="1.7" fill="#a6e2ff"/><rect x="1818" y="1050" width="1" height="1.7" fill="#d8d8d8"/><rect x="1820" y="1050" width="7" height="1.7" fill="#d99a7e"/><rect x="1827" y="1050" width="1" height="1.7" fill="#d8d8d8"/><rect x="1806" y="1052" width="10" height="1.7" fill="#a6e2ff"/><rect x="1816" y="1052" width="1" height="1.7" fill="#d8d8d8"/><rect x="1818" y="1052" width="6" height="1.7" fill="#d99a7e"/><rect x="1802" y="1054" width="1" height="1.7" fill="#d8d8d8"/><rect x="1803" y="1054" width="1" height="1.7" fill="#d8d8d8"/></g><rect x="1794" y="860" width="112" height="114" fill="#22374f"/><rect x="1803" y="860" width="1" height="2" fill="#2a5480"/><rect x="1794" y="862" width="9" height="2" fill="#2a5480"/><rect x="1794" y="864" width="38" height="2" fill="#2a5480"/><rect x="1794" y="866" width="28" height="2" fill="#2a5480"/><rect x="1794" y="868" width="28" height="2" fill="#2a5480"/><rect x="1794" y="870" width="34" height="2" fill="#2a5480"/><rect x="1794" y="872" width="22" height="2" fill="#2a5480"/><rect x="1794" y="874" width="17" height="2" fill="#2a5480"/><rect x="1794" y="876" width="71" height="2" fill="#2a5480"/><rect x="1794" y="878" width="30" height="2" fill="#2a5480"/><rect x="1794" y="880" width="68" height="2" fill="#2a5480"/><rect x="1794" y="882" width="57" height="2" fill="#2a5480"/><rect x="1794" y="884" width="69" height="2" fill="#2a5480"/><rect x="1794" y="886" width="41" height="2" fill="#2a5480"/><rect x="1794" y="888" width="17" height="2" fill="#2a5480"/><rect x="1794" y="890" width="14" height="2" fill="#2a5480"/><rect x="1794" y="892" width="25" height="2" fill="#2a5480"/><rect x="1794" y="894" width="17" height="2" fill="#2a5480"/><rect x="1794" y="896" width="38" height="2" fill="#2a5480"/><rect x="1794" y="898" width="17" height="2" fill="#2a5480"/><rect x="1794" y="900" width="14" height="2" fill="#2a5480"/><rect x="1794" y="902" width="28" height="2" fill="#2a5480"/><rect x="1794" y="904" width="17" height="2" fill="#2a5480"/><rect x="1794" y="906" width="32" height="2" fill="#2a5480"/><rect x="1794" y="908" width="25" height="2" fill="#2a5480"/><rect x="1794" y="910" width="50" height="2" fill="#2a5480"/><rect x="1794" y="912" width="48" height="2" fill="#2a5480"/><rect x="1794" y="914" width="40" height="2" fill="#2a5480"/><rect x="1794" y="916" width="47" height="2" fill="#2a5480"/><rect x="1794" y="918" width="46" height="2" fill="#2a5480"/><rect x="1794" y="920" width="30" height="2" fill="#2a5480"/><rect x="1794" y="922" width="44" height="2" fill="#2a5480"/><rect x="1794" y="924" width="25" height="2" fill="#2a5480"/><rect x="1794" y="926" width="22" height="2" fill="#2a5480"/><rect x="1794" y="928" width="36" height="2" fill="#2a5480"/><rect x="1794" y="930" width="17" height="2" fill="#2a5480"/><rect x="1794" y="932" width="13" height="2" fill="#2a5480"/><rect x="1794" y="934" width="10" height="2" fill="#2a5480"/><rect x="1794" y="936" width="6" height="2" fill="#2a5480"/><rect x="1794" y="938" width="34" height="2" fill="#2a5480"/><rect x="1794" y="940" width="52" height="2" fill="#2a5480"/><rect x="1794" y="942" width="22" height="2" fill="#2a5480"/><rect x="1794" y="944" width="22" height="2" fill="#2a5480"/><rect x="1794" y="946" width="28" height="2" fill="#2a5480"/><rect x="1794" y="948" width="16" height="2" fill="#2a5480"/><rect x="1794" y="950" width="9" height="2" fill="#2a5480"/><rect x="1794" y="952" width="51" height="2" fill="#2a5480"/><rect x="1794" y="954" width="23" height="2" fill="#2a5480"/><rect x="1794" y="956" width="9" height="2" fill="#2a5480"/><rect x="1794" y="958" width="8" height="2" fill="#2a5480"/><rect x="1794" y="960" width="19" height="2" fill="#2a5480"/><rect x="1794" y="962" width="9" height="2" fill="#2a5480"/><rect x="1794" y="964" width="28" height="2" fill="#2a5480"/><rect x="1794" y="966" width="9" height="2" fill="#2a5480"/><rect x="1794" y="968" width="8" height="2" fill="#2a5480"/><rect x="1794" y="970" width="23" height="2" fill="#2a5480"/><rect x="1794" y="972" width="6" height="2" fill="#2a5480"/><rect x="1906" y="110" width="1" height="948" fill="#3a3a3a"/><rect x="1906" y="110" width="14" height="1" fill="#3a3a3a"/><rect x="1907" y="920" width="13" height="25" fill="#4f4f4f"/><rect x="1907" y="946" width="13" height="1" fill="#111"/><rect x="1907" y="947" width="13" height="2" fill="#c0c0c0"/></svg>
    </div>
  </div>
  <div id="status">
    <svg class="abs" style="left:15.5px;top:4.5px" width="13" height="13" viewBox="0 0 13 13" fill="none" stroke="#fff" stroke-width="1.1"><circle cx="6.5" cy="6.5" r="5.6"/><path d="M4.4 4.4l4.2 4.2M8.6 4.4l-4.2 4.2"/></svg>
    <span class="s" style="left:32px">0</span>
    <svg class="abs" style="left:44px;top:4.5px" width="13" height="13" viewBox="0 0 13 13" fill="none" stroke="#fff" stroke-width="1.1" stroke-linejoin="round"><path d="M6.5 0.9l5.6 10.6h-11.2z"/><path d="M6.5 4.8v4.2"/></svg>
    <span class="s" style="left:61px">0</span>
    <span class="s" style="left:1470px">Ln 1739, Col 7 (1623 selected)</span>
    <span class="s" style="left:1658px">Spaces: 4</span>
    <span class="s" style="left:1730px">UTF-8</span>
    <span class="s" style="left:1782px">LF</span>
    <span class="s" style="left:1812px">JSON</span>
    <svg class="abs" style="left:1860px;top:4px" width="15" height="15" viewBox="0 0 15 15" fill="none" stroke="#fff" stroke-width="1"><circle cx="5" cy="6" r="2.3"/><path d="M1 13c0.5-2.5 2-3.7 4-3.7s3.5 1.2 4 3.7"/><path d="M8 1.5h6v5h-2.5l-2 2v-2"/></svg>
    <svg class="abs" style="left:1891px;top:4px" width="14" height="15" viewBox="0 0 14 15" fill="none" stroke="#fff" stroke-width="1"><path d="M1.8 10.8h10.4l-1.2-1.6v-4.2a4 4 0 0 0-8 0v4.2z"/><path d="M5.7 11.4a1.3 1.3 0 0 0 2.6 0"/></svg>
  </div>
</div>
<div id="wborder"></div><div id="wborder2"></div>
</body></html>
